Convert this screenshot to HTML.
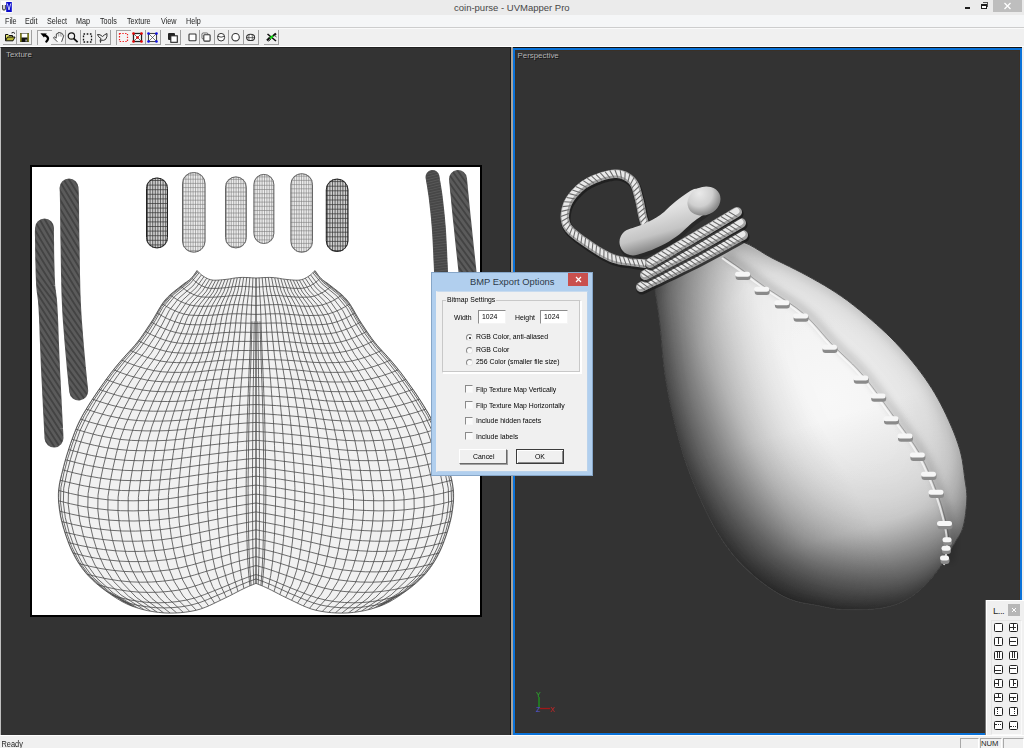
<!DOCTYPE html>
<html><head><meta charset="utf-8">
<style>
*{margin:0;padding:0;box-sizing:border-box}
html,body{width:1024px;height:748px;overflow:hidden;background:#f0f0f0;font-family:"Liberation Sans",sans-serif;color:#000}
.abs{position:absolute}
#title{left:0;top:0;width:1024px;height:15px;background:#ebebeb}
#title .t{left:454px;top:2px;font-size:9.5px;color:#474747;white-space:nowrap}
#menu{left:0;top:15px;width:1024px;height:13px;background:#f5f6f7;border-bottom:1px solid #cdcdcd}
#menu span{position:absolute;top:1.5px;font-size:7.2px;color:#1e1e1e;white-space:nowrap;transform:scaleY(1.24);transform-origin:0 100%}
#tool{left:0;top:28px;width:1024px;height:19px;background:#f0f0f0;border-top:1px solid #fafafa;border-bottom:1px solid #fff}
#vl{left:0;top:47px;width:511px;height:688px;background:#333;border-left:1px solid #c0c0c0;border-top:1px solid #202020;border-right:1px solid #111}
#sep{left:511px;top:47px;width:2px;height:688px;background:#a9a39b}
#vr{left:513px;top:48px;width:509px;height:687px;background:#333;border:2px solid #0a72d8;box-shadow:0 -1px 0 #111}
#vr .in{position:absolute;left:0;top:0;right:0;bottom:0;border:1px solid #3a3026}
.vlab{position:absolute;font-size:7.9px;color:#b4b4b4;text-shadow:1px 1px 0 #141414;white-space:nowrap}
#status{left:0;top:735px;width:1024px;height:13px;background:#f0f0f0;border-top:1px solid #fff}
#status .t{left:1.5px;top:3px;font-size:7.4px;color:#1a1a1a;transform:scaleY(1.1);transform-origin:0 0}
.pan{position:absolute;top:2px;height:12px;border-top:1px solid #a8a8a8;border-left:1px solid #a8a8a8;border-right:1px solid #fff}
#dlg{left:431px;top:272px;width:162px;height:204px;background:#b1cfee;border:1px solid #86a6c8}
#dlg .cl{position:absolute;left:4px;top:18px;width:152px;height:181px;background:#f0f0f0;border:1px solid #b9d2ec;border-left:2px solid #f0f0f0;border-top-color:#c8dbef}
.dt{position:absolute;font-size:6.9px;color:#000;white-space:nowrap;transform:scaleY(1.12);transform-origin:0 100%}
.chk{position:absolute;width:8px;height:8px;border-left:1px solid #8a8a8a;border-top:1px solid #8a8a8a;border-right:1px solid #f6f6f6;border-bottom:1px solid #f6f6f6;background:#fafafa}
.rad{position:absolute;width:7px;height:7px;border-radius:50%;border:1px solid #888;border-right-color:#e6e6e6;border-bottom-color:#e6e6e6;background:#fafafa}
.dbtn{position:absolute;height:15px;background:#f0f0f0;border-left:1px solid #fff;border-top:1px solid #fff;border-right:1px solid #6a6a6a;border-bottom:1px solid #6a6a6a;box-shadow:1px 1px 0 #a0a0a0}
.edit{position:absolute;background:#fff;border-top:1px solid #8c8c8c;border-left:1px solid #8c8c8c;border-right:1px solid #f4f4f4;border-bottom:1px solid #f4f4f4}
#flt{left:986px;top:600px;width:38px;height:135px;background:#f0f0f0;border-top:1px solid #fff;border-left:1px solid #fff;box-shadow:-1px 0 0 #7a7a7a}
.fi{position:absolute;width:9px;height:9px;border:1.5px solid #222;border-radius:1.5px;background:#fff}
</style></head><body>

<div id="title" class="abs">
  <svg class="abs" style="left:0;top:0" width="14" height="14" viewBox="0 0 14 14"><rect x="1" y="1" width="11.5" height="12" fill="#fbfbfb"/><path d="M2.6,5 V8.6 Q2.6,10 4,10 Q5.4,10 5.4,8.6 V5" fill="none" stroke="#555" stroke-width="1.3"/><rect x="6.2" y="2" width="5.6" height="10" fill="#0a0acc"/><path d="M7.3,3.5 L9,10 L10.7,3.5" fill="none" stroke="#dfe4ff" stroke-width="0.9"/></svg>
  <div class="abs t">coin-purse - UVMapper Pro</div>
  <div class="abs" style="left:965px;top:7px;width:5px;height:2px;background:#1e1e1e"></div>
  <div class="abs" style="left:983px;top:2px;width:5px;height:5px;border-top:1px solid #555;border-right:1px solid #555"></div>
  <div class="abs" style="left:981px;top:4px;width:6px;height:5px;border:1px solid #1e1e1e;border-top-width:2px;background:#fff"></div>
  <div class="abs" style="left:993px;top:0;width:29px;height:12px;background:#bebebe"></div>
  <svg class="abs" style="left:1003px;top:2px" width="9" height="8" viewBox="0 0 9 8"><path d="M1.5,1 L7.5,7 M7.5,1 L1.5,7" stroke="#fff" stroke-width="1.3"/></svg>
</div>

<div id="menu" class="abs">
  <span style="left:5px">File</span><span style="left:25px">Edit</span><span style="left:47px">Select</span><span style="left:76px">Map</span><span style="left:100px">Tools</span><span style="left:127px">Texture</span><span style="left:161px">View</span><span style="left:186px">Help</span>
</div>

<div id="tool" class="abs"></div>
<div class="abs" style="left:3px;top:30px;width:14px;height:15px;border-right:1px solid #a0a0a0;border-bottom:1px solid #a0a0a0;z-index:1"></div>
<svg class="abs" style="left:3px;top:30px" width="15" height="15" viewBox="0 0 15 15"><path d="M2.5,10.5 L2.5,4.5 L5,4.5 L6,5.5 L9.5,5.5 L9.5,7" fill="#e8e870" stroke="#111" stroke-width="1"/><path d="M2.5,10.8 L4.5,7 L12,7 L10,10.8 Z" fill="#b5b530" stroke="#111" stroke-width="1"/><path d="M8.5,3 Q10.5,1.5 12,3.5" fill="none" stroke="#111" stroke-width="1"/></svg>
<div class="abs" style="left:17px;top:30px;width:15px;height:15px;border-right:1px solid #a0a0a0;border-bottom:1px solid #a0a0a0;z-index:1"></div>
<svg class="abs" style="left:17px;top:30px" width="15" height="15" viewBox="0 0 15 15"><rect x="3" y="3" width="9" height="9" fill="#111"/><rect x="4.5" y="3.5" width="6" height="4" fill="#fff"/><rect x="3.2" y="3.2" width="1.3" height="8.6" fill="#9a9a20"/><rect x="10.5" y="3.2" width="1.3" height="8.6" fill="#9a9a20"/><rect x="8.5" y="9.5" width="1.2" height="2" fill="#ccc"/></svg>
<div class="abs" style="left:37px;top:30px;width:15px;height:15px;border-left:1px solid #a3a3a3;border-top:1px solid #a3a3a3;background:#f4f4f4"></div>
<svg class="abs" style="left:37px;top:30px" width="15" height="15" viewBox="0 0 15 15"><path d="M3.4,3.3 L9.8,3.4 L6.9,7.5 Z" fill="#000"/><path d="M7.6,5 Q11.6,7 11,9 Q10.6,10.5 9.3,11.6" fill="none" stroke="#000" stroke-width="2.2" stroke-linecap="round"/></svg>
<div class="abs" style="left:51px;top:30px;width:15px;height:15px;border-right:1px solid #a0a0a0;border-bottom:1px solid #a0a0a0;z-index:1"></div>
<svg class="abs" style="left:51px;top:30px" width="15" height="15" viewBox="0 0 15 15"><path d="M6.4,11.8 L2.8,8.2 Q2.3,7.2 3.3,6.9 L5.2,8.2 L5.4,3.9 Q6,3 6.8,3.7 L7.2,2.6 Q8,1.9 8.8,2.7 L10,3 Q10.9,2.9 11.1,4 L12,4.5 Q12.9,5.1 12.6,6.2 L10.6,11.8" fill="#fff" stroke="#333" stroke-width="0.9" stroke-linejoin="round"/><path d="M7.2,3 L7.4,6.5 M9.2,3 L9.2,6.5 M11,4 L10.9,6.8" stroke="#666" stroke-width="0.6"/></svg>
<div class="abs" style="left:65px;top:30px;width:16px;height:15px;border-right:1px solid #a0a0a0;border-bottom:1px solid #a0a0a0;z-index:1"></div>
<svg class="abs" style="left:65px;top:30px" width="15" height="15" viewBox="0 0 15 15"><circle cx="6.4" cy="6" r="3.2" fill="none" stroke="#111" stroke-width="1.2"/><path d="M8.6,8.4 L12.6,12.2" stroke="#111" stroke-width="1.8"/></svg>
<div class="abs" style="left:80px;top:30px;width:16px;height:15px;border-right:1px solid #a0a0a0;border-bottom:1px solid #a0a0a0;z-index:1"></div>
<svg class="abs" style="left:80px;top:30px" width="15" height="15" viewBox="0 0 15 15"><rect x="3.5" y="4" width="8" height="8" fill="none" stroke="#111" stroke-width="1.3" stroke-dasharray="1.6 1.6"/></svg>
<div class="abs" style="left:95px;top:30px;width:16px;height:15px;border-right:1px solid #a0a0a0;border-bottom:1px solid #a0a0a0;z-index:1"></div>
<svg class="abs" style="left:95px;top:30px" width="15" height="15" viewBox="0 0 15 15"><path d="M2.5,4.5 Q5,4 7.5,6.5 Q9.5,4.5 12,3.5 Q12.5,7 10.5,9.5 Q8.5,11 6,10 L5.5,12.5 Q4.5,9.5 6,8.5 Q3,7 2.5,4.5 Z" fill="none" stroke="#333" stroke-width="1"/></svg>
<div class="abs" style="left:116px;top:30px;width:15px;height:15px;border-left:1px solid #a3a3a3;border-top:1px solid #a3a3a3;background:#f4f4f4"></div>
<svg class="abs" style="left:116px;top:30px" width="15" height="15" viewBox="0 0 15 15"><rect x="3.5" y="3.5" width="8" height="8" fill="none" stroke="#f02020" stroke-width="1.2" stroke-dasharray="1.4 1.4"/></svg>
<div class="abs" style="left:130px;top:30px;width:16px;height:15px;border-right:1px solid #a0a0a0;border-bottom:1px solid #a0a0a0;z-index:1"></div>
<svg class="abs" style="left:130px;top:30px" width="15" height="15" viewBox="0 0 15 15"><rect x="3.5" y="3.5" width="8" height="8" fill="#fff" stroke="#222" stroke-width="1.3"/><path d="M3.5,3.5 L11.5,11.5 M11.5,3.5 L3.5,11.5" stroke="#444" stroke-width="0.8"/><circle cx="7.5" cy="7.5" r="1.3" fill="#e00"/><circle cx="3.5" cy="3.5" r="1.3" fill="#e00"/><circle cx="11.5" cy="3.5" r="1.3" fill="#e00"/><circle cx="3.5" cy="11.5" r="1.3" fill="#e00"/><circle cx="11.5" cy="11.5" r="1.3" fill="#e00"/></svg>
<div class="abs" style="left:145px;top:30px;width:16px;height:15px;border-right:1px solid #a0a0a0;border-bottom:1px solid #a0a0a0;z-index:1"></div>
<svg class="abs" style="left:145px;top:30px" width="15" height="15" viewBox="0 0 15 15"><rect x="3.5" y="3.5" width="8" height="8" fill="#fff" stroke="#444" stroke-width="1.1"/><path d="M3.5,3.5 L11.5,11.5 M11.5,3.5 L3.5,11.5" stroke="#555" stroke-width="0.8"/><circle cx="3.5" cy="3.5" r="1.3" fill="#11e"/><circle cx="11.5" cy="3.5" r="1.3" fill="#11e"/><circle cx="3.5" cy="11.5" r="1.3" fill="#11e"/><circle cx="11.5" cy="11.5" r="1.3" fill="#11e"/></svg>
<div class="abs" style="left:165px;top:30px;width:16px;height:15px;border-right:1px solid #a0a0a0;border-bottom:1px solid #a0a0a0;z-index:1"></div>
<svg class="abs" style="left:165px;top:30px" width="15" height="15" viewBox="0 0 15 15"><rect x="3" y="3" width="7" height="7" rx="1" fill="#222"/><rect x="5.8" y="5.8" width="6.5" height="6.5" fill="#fff" stroke="#222" stroke-width="1.1"/></svg>
<div class="abs" style="left:185px;top:30px;width:15px;height:15px;border-right:1px solid #a0a0a0;border-bottom:1px solid #a0a0a0;z-index:1"></div>
<svg class="abs" style="left:185px;top:30px" width="15" height="15" viewBox="0 0 15 15"><rect x="4" y="4" width="7" height="6.8" rx="0.8" fill="#fff" stroke="#333" stroke-width="1.1"/></svg>
<div class="abs" style="left:199px;top:30px;width:16px;height:15px;border-right:1px solid #a0a0a0;border-bottom:1px solid #a0a0a0;z-index:1"></div>
<svg class="abs" style="left:199px;top:30px" width="15" height="15" viewBox="0 0 15 15"><rect x="3" y="3" width="6" height="6" rx="1.2" fill="#fff" stroke="#555" stroke-width="0.9"/><rect x="4.8" y="4.8" width="6.3" height="6.3" rx="0.8" fill="#fff" stroke="#333" stroke-width="1.1"/></svg>
<div class="abs" style="left:214px;top:30px;width:15px;height:15px;border-right:1px solid #a0a0a0;border-bottom:1px solid #a0a0a0;z-index:1"></div>
<svg class="abs" style="left:214px;top:30px" width="15" height="15" viewBox="0 0 15 15"><rect x="3.6" y="3.4" width="7" height="7.6" rx="3.5" fill="#fff" stroke="#333" stroke-width="1"/><path d="M3.6,6.3 Q7.1,8 10.6,6.3" fill="none" stroke="#333" stroke-width="0.9"/></svg>
<div class="abs" style="left:228px;top:30px;width:16px;height:15px;border-right:1px solid #a0a0a0;border-bottom:1px solid #a0a0a0;z-index:1"></div>
<svg class="abs" style="left:228px;top:30px" width="15" height="15" viewBox="0 0 15 15"><circle cx="7.6" cy="7.2" r="3.7" fill="#fff" stroke="#333" stroke-width="1.1"/></svg>
<div class="abs" style="left:243px;top:30px;width:16px;height:15px;border-right:1px solid #a0a0a0;border-bottom:1px solid #a0a0a0;z-index:1"></div>
<svg class="abs" style="left:243px;top:30px" width="15" height="15" viewBox="0 0 15 15"><ellipse cx="7.6" cy="7.4" rx="4" ry="3.1" fill="#fff" stroke="#333" stroke-width="1.1"/><path d="M6.2,4.5 Q5.3,7.4 6.2,10.3 M9,4.5 Q9.9,7.4 9,10.3 M3.8,7.6 L11.4,7.6" fill="none" stroke="#333" stroke-width="0.7"/></svg>
<div class="abs" style="left:264px;top:30px;width:15px;height:15px;border-right:1px solid #a0a0a0;border-bottom:1px solid #a0a0a0;z-index:1"></div>
<svg class="abs" style="left:264px;top:30px" width="15" height="15" viewBox="0 0 15 15"><path d="M3,10.5 L6,7.5 M9,6 L12,3.5" stroke="#111" stroke-width="2.2"/><path d="M3.5,4 L12,11" stroke="#111" stroke-width="1.6"/><path d="M4.5,11.5 L7,9 M10,5 L12.5,7" stroke="#444" stroke-width="1"/><path d="M6,8.5 L9,5.8" stroke="#10d010" stroke-width="2.2"/></svg>

<div id="vl" class="abs"><div class="vlab" style="left:5px;top:1.5px">Texture</div></div>
<div id="sep" class="abs"></div>
<div id="vr" class="abs"><div class="in"></div><div class="vlab" style="left:2.5px;top:0.5px">Perspective</div></div>
<svg class="abs" style="left:0;top:0" width="1024" height="748" viewBox="0 0 1024 748">
<rect x="30" y="165" width="452" height="452" fill="#000"/>
<rect x="32" y="167" width="448" height="448" fill="#fff"/>
<defs><clipPath id="bagclip"><path d="M256.0,278.0 L254.2,277.9 L251.8,277.8 L248.9,277.6 L245.9,277.5 L242.8,277.4 L240.0,277.5 L237.4,277.7 L234.9,278.0 L232.3,278.4 L229.8,278.9 L227.4,279.2 L225.0,279.5 L222.7,279.7 L220.4,279.9 L218.1,280.1 L216.0,280.2 L213.9,280.2 L212.0,280.0 L210.2,279.6 L208.6,279.1 L207.1,278.4 L205.6,277.6 L204.3,276.8 L203.0,276.0 L201.8,275.1 L200.6,274.1 L199.4,273.0 L198.4,272.0 L197.6,271.1 L197.0,270.5 L196.4,271.4 L195.6,272.6 L194.6,274.0 L193.5,275.6 L192.3,277.1 L191.0,278.5 L189.6,279.7 L188.2,280.8 L186.6,281.9 L184.9,283.0 L183.1,284.4 L181.0,286.0 L178.6,287.9 L176.0,289.9 L173.2,292.2 L170.3,294.6 L167.6,297.2 L165.0,300.0 L162.7,303.1 L160.5,306.5 L158.4,310.1 L156.3,313.7 L154.2,317.4 L152.0,321.0 L149.7,324.5 L147.3,328.1 L144.9,331.7 L142.5,335.2 L140.0,338.7 L137.5,342.0 L134.9,345.2 L132.1,348.3 L129.4,351.3 L126.6,354.3 L124.0,357.2 L121.5,360.0 L119.3,362.6 L117.2,365.1 L115.2,367.5 L113.3,369.9 L111.2,372.5 L109.0,375.5 L106.5,378.8 L103.9,382.5 L101.2,386.3 L98.4,390.2 L95.8,394.1 L93.2,398.0 L90.7,401.8 L88.3,405.6 L85.9,409.5 L83.6,413.3 L81.5,417.2 L79.5,421.0 L77.7,424.8 L76.1,428.6 L74.6,432.3 L73.2,436.1 L71.8,439.8 L70.5,443.6 L69.2,447.4 L68.0,451.2 L66.8,454.9 L65.7,458.7 L64.6,462.6 L63.6,466.4 L62.6,470.3 L61.6,474.3 L60.6,478.3 L59.7,482.3 L59.1,486.2 L58.6,490.0 L58.4,493.7 L58.4,497.3 L58.5,500.9 L58.8,504.4 L59.2,507.9 L59.7,511.5 L60.3,515.1 L61.0,518.7 L61.9,522.3 L62.8,525.8 L63.9,529.4 L65.0,533.0 L66.2,536.6 L67.5,540.2 L68.8,543.8 L70.3,547.4 L71.9,551.0 L73.6,554.4 L75.4,557.8 L77.3,561.1 L79.4,564.4 L81.6,567.6 L83.9,570.7 L86.5,573.8 L89.3,576.8 L92.3,579.8 L95.4,582.7 L98.7,585.5 L102.2,588.3 L105.9,591.0 L109.7,593.7 L113.8,596.5 L117.9,599.1 L122.3,601.7 L126.9,604.0 L131.6,606.0 L136.6,607.7 L141.9,609.3 L147.3,610.6 L152.9,611.6 L158.5,612.4 L163.9,612.9 L169.3,613.1 L174.8,613.0 L180.3,612.7 L185.8,612.1 L191.0,611.3 L196.0,610.3 L200.7,609.0 L205.3,607.3 L209.6,605.5 L213.8,603.5 L217.9,601.5 L221.9,599.6 L225.8,597.7 L229.7,595.8 L233.4,593.9 L237.0,592.0 L240.3,590.3 L243.3,588.8 L246.1,587.5 L248.6,586.4 L251.0,585.4 L253.0,584.6 L254.7,583.9 L256.0,583.4 L257.3,583.9 L259.0,584.6 L261.0,585.4 L263.4,586.4 L265.9,587.5 L268.7,588.8 L271.7,590.3 L275.0,592.0 L278.6,593.9 L282.3,595.8 L286.2,597.7 L290.1,599.6 L294.1,601.5 L298.2,603.5 L302.4,605.5 L306.7,607.3 L311.3,609.0 L316.0,610.3 L321.0,611.3 L326.2,612.1 L331.6,612.7 L337.2,613.0 L342.7,613.1 L348.1,612.9 L353.5,612.4 L359.1,611.6 L364.6,610.6 L370.1,609.3 L375.4,607.7 L380.4,606.0 L385.1,604.0 L389.7,601.7 L394.1,599.1 L398.2,596.5 L402.3,593.7 L406.1,591.0 L409.8,588.3 L413.3,585.5 L416.6,582.7 L419.7,579.8 L422.7,576.8 L425.5,573.8 L428.1,570.7 L430.4,567.6 L432.6,564.4 L434.7,561.1 L436.6,557.8 L438.4,554.4 L440.1,551.0 L441.7,547.4 L443.2,543.8 L444.5,540.2 L445.8,536.6 L447.0,533.0 L448.1,529.4 L449.2,525.8 L450.1,522.3 L451.0,518.7 L451.7,515.1 L452.3,511.5 L452.8,507.9 L453.2,504.4 L453.5,500.9 L453.6,497.3 L453.6,493.7 L453.4,490.0 L452.9,486.2 L452.3,482.3 L451.4,478.3 L450.4,474.3 L449.4,470.3 L448.4,466.4 L447.4,462.6 L446.3,458.7 L445.2,454.9 L444.0,451.2 L442.8,447.4 L441.5,443.6 L440.2,439.8 L438.8,436.1 L437.4,432.3 L435.9,428.6 L434.3,424.8 L432.5,421.0 L430.5,417.2 L428.4,413.3 L426.1,409.5 L423.7,405.6 L421.3,401.8 L418.8,398.0 L416.3,394.1 L413.6,390.2 L410.8,386.3 L408.1,382.5 L405.5,378.8 L403.0,375.5 L400.8,372.5 L398.7,369.9 L396.8,367.5 L394.8,365.1 L392.7,362.6 L390.5,360.0 L388.0,357.2 L385.4,354.3 L382.6,351.3 L379.9,348.3 L377.1,345.2 L374.5,342.0 L372.0,338.7 L369.5,335.2 L367.1,331.7 L364.7,328.1 L362.3,324.5 L360.0,321.0 L357.8,317.4 L355.7,313.7 L353.6,310.1 L351.5,306.5 L349.3,303.1 L347.0,300.0 L344.4,297.2 L341.7,294.6 L338.8,292.2 L336.0,289.9 L333.4,287.9 L331.0,286.0 L328.9,284.4 L327.1,283.0 L325.4,281.9 L323.8,280.8 L322.4,279.7 L321.0,278.5 L319.7,277.1 L318.5,275.6 L317.4,274.0 L316.4,272.6 L315.6,271.4 L315.0,270.5 L314.4,271.1 L313.6,272.0 L312.6,273.0 L311.4,274.1 L310.2,275.1 L309.0,276.0 L307.7,276.8 L306.4,277.6 L304.9,278.4 L303.4,279.1 L301.8,279.6 L300.0,280.0 L298.1,280.2 L296.0,280.2 L293.9,280.1 L291.6,279.9 L289.3,279.7 L287.0,279.5 L284.6,279.2 L282.2,278.9 L279.7,278.4 L277.1,278.0 L274.6,277.7 L272.0,277.5 L269.2,277.4 L266.1,277.5 L263.1,277.6 L260.2,277.8 L257.8,277.9 L256.0,278.0Z"/></clipPath></defs>
<path d="M256.0,278.0 L254.2,277.9 L251.8,277.8 L248.9,277.6 L245.9,277.5 L242.8,277.4 L240.0,277.5 L237.4,277.7 L234.9,278.0 L232.3,278.4 L229.8,278.9 L227.4,279.2 L225.0,279.5 L222.7,279.7 L220.4,279.9 L218.1,280.1 L216.0,280.2 L213.9,280.2 L212.0,280.0 L210.2,279.6 L208.6,279.1 L207.1,278.4 L205.6,277.6 L204.3,276.8 L203.0,276.0 L201.8,275.1 L200.6,274.1 L199.4,273.0 L198.4,272.0 L197.6,271.1 L197.0,270.5 L196.4,271.4 L195.6,272.6 L194.6,274.0 L193.5,275.6 L192.3,277.1 L191.0,278.5 L189.6,279.7 L188.2,280.8 L186.6,281.9 L184.9,283.0 L183.1,284.4 L181.0,286.0 L178.6,287.9 L176.0,289.9 L173.2,292.2 L170.3,294.6 L167.6,297.2 L165.0,300.0 L162.7,303.1 L160.5,306.5 L158.4,310.1 L156.3,313.7 L154.2,317.4 L152.0,321.0 L149.7,324.5 L147.3,328.1 L144.9,331.7 L142.5,335.2 L140.0,338.7 L137.5,342.0 L134.9,345.2 L132.1,348.3 L129.4,351.3 L126.6,354.3 L124.0,357.2 L121.5,360.0 L119.3,362.6 L117.2,365.1 L115.2,367.5 L113.3,369.9 L111.2,372.5 L109.0,375.5 L106.5,378.8 L103.9,382.5 L101.2,386.3 L98.4,390.2 L95.8,394.1 L93.2,398.0 L90.7,401.8 L88.3,405.6 L85.9,409.5 L83.6,413.3 L81.5,417.2 L79.5,421.0 L77.7,424.8 L76.1,428.6 L74.6,432.3 L73.2,436.1 L71.8,439.8 L70.5,443.6 L69.2,447.4 L68.0,451.2 L66.8,454.9 L65.7,458.7 L64.6,462.6 L63.6,466.4 L62.6,470.3 L61.6,474.3 L60.6,478.3 L59.7,482.3 L59.1,486.2 L58.6,490.0 L58.4,493.7 L58.4,497.3 L58.5,500.9 L58.8,504.4 L59.2,507.9 L59.7,511.5 L60.3,515.1 L61.0,518.7 L61.9,522.3 L62.8,525.8 L63.9,529.4 L65.0,533.0 L66.2,536.6 L67.5,540.2 L68.8,543.8 L70.3,547.4 L71.9,551.0 L73.6,554.4 L75.4,557.8 L77.3,561.1 L79.4,564.4 L81.6,567.6 L83.9,570.7 L86.5,573.8 L89.3,576.8 L92.3,579.8 L95.4,582.7 L98.7,585.5 L102.2,588.3 L105.9,591.0 L109.7,593.7 L113.8,596.5 L117.9,599.1 L122.3,601.7 L126.9,604.0 L131.6,606.0 L136.6,607.7 L141.9,609.3 L147.3,610.6 L152.9,611.6 L158.5,612.4 L163.9,612.9 L169.3,613.1 L174.8,613.0 L180.3,612.7 L185.8,612.1 L191.0,611.3 L196.0,610.3 L200.7,609.0 L205.3,607.3 L209.6,605.5 L213.8,603.5 L217.9,601.5 L221.9,599.6 L225.8,597.7 L229.7,595.8 L233.4,593.9 L237.0,592.0 L240.3,590.3 L243.3,588.8 L246.1,587.5 L248.6,586.4 L251.0,585.4 L253.0,584.6 L254.7,583.9 L256.0,583.4 L257.3,583.9 L259.0,584.6 L261.0,585.4 L263.4,586.4 L265.9,587.5 L268.7,588.8 L271.7,590.3 L275.0,592.0 L278.6,593.9 L282.3,595.8 L286.2,597.7 L290.1,599.6 L294.1,601.5 L298.2,603.5 L302.4,605.5 L306.7,607.3 L311.3,609.0 L316.0,610.3 L321.0,611.3 L326.2,612.1 L331.6,612.7 L337.2,613.0 L342.7,613.1 L348.1,612.9 L353.5,612.4 L359.1,611.6 L364.6,610.6 L370.1,609.3 L375.4,607.7 L380.4,606.0 L385.1,604.0 L389.7,601.7 L394.1,599.1 L398.2,596.5 L402.3,593.7 L406.1,591.0 L409.8,588.3 L413.3,585.5 L416.6,582.7 L419.7,579.8 L422.7,576.8 L425.5,573.8 L428.1,570.7 L430.4,567.6 L432.6,564.4 L434.7,561.1 L436.6,557.8 L438.4,554.4 L440.1,551.0 L441.7,547.4 L443.2,543.8 L444.5,540.2 L445.8,536.6 L447.0,533.0 L448.1,529.4 L449.2,525.8 L450.1,522.3 L451.0,518.7 L451.7,515.1 L452.3,511.5 L452.8,507.9 L453.2,504.4 L453.5,500.9 L453.6,497.3 L453.6,493.7 L453.4,490.0 L452.9,486.2 L452.3,482.3 L451.4,478.3 L450.4,474.3 L449.4,470.3 L448.4,466.4 L447.4,462.6 L446.3,458.7 L445.2,454.9 L444.0,451.2 L442.8,447.4 L441.5,443.6 L440.2,439.8 L438.8,436.1 L437.4,432.3 L435.9,428.6 L434.3,424.8 L432.5,421.0 L430.5,417.2 L428.4,413.3 L426.1,409.5 L423.7,405.6 L421.3,401.8 L418.8,398.0 L416.3,394.1 L413.6,390.2 L410.8,386.3 L408.1,382.5 L405.5,378.8 L403.0,375.5 L400.8,372.5 L398.7,369.9 L396.8,367.5 L394.8,365.1 L392.7,362.6 L390.5,360.0 L388.0,357.2 L385.4,354.3 L382.6,351.3 L379.9,348.3 L377.1,345.2 L374.5,342.0 L372.0,338.7 L369.5,335.2 L367.1,331.7 L364.7,328.1 L362.3,324.5 L360.0,321.0 L357.8,317.4 L355.7,313.7 L353.6,310.1 L351.5,306.5 L349.3,303.1 L347.0,300.0 L344.4,297.2 L341.7,294.6 L338.8,292.2 L336.0,289.9 L333.4,287.9 L331.0,286.0 L328.9,284.4 L327.1,283.0 L325.4,281.9 L323.8,280.8 L322.4,279.7 L321.0,278.5 L319.7,277.1 L318.5,275.6 L317.4,274.0 L316.4,272.6 L315.6,271.4 L315.0,270.5 L314.4,271.1 L313.6,272.0 L312.6,273.0 L311.4,274.1 L310.2,275.1 L309.0,276.0 L307.7,276.8 L306.4,277.6 L304.9,278.4 L303.4,279.1 L301.8,279.6 L300.0,280.0 L298.1,280.2 L296.0,280.2 L293.9,280.1 L291.6,279.9 L289.3,279.7 L287.0,279.5 L284.6,279.2 L282.2,278.9 L279.7,278.4 L277.1,278.0 L274.6,277.7 L272.0,277.5 L269.2,277.4 L266.1,277.5 L263.1,277.6 L260.2,277.8 L257.8,277.9 L256.0,278.0Z" fill="#f1f1f1"/>
<g clip-path="url(#bagclip)"><path d="M252.9,277.8 252.4,290.8 251.6,303.6 251.1,316.5 250.7,329.3 250.3,342.2 249.8,355.0 249.2,367.9 248.7,380.7 248.2,393.5 247.7,406.4 247.3,419.2 247.0,432.0 246.7,444.8 246.5,457.7 246.3,470.5 246.2,483.3 246.2,496.1 246.3,509.0 246.5,521.8 246.8,534.6 247.2,547.4 247.7,560.2 248.6,573.1 249.9,585.9M249.8,277.7 248.8,290.5 247.3,303.4 246.2,316.3 245.5,329.2 244.7,342.1 243.7,355.0 242.5,368.0 241.4,380.9 240.4,393.9 239.5,406.8 238.6,419.8 238.0,432.7 237.5,445.7 237.0,458.7 236.7,471.6 236.4,484.6 236.4,497.6 236.6,510.6 237.0,523.6 237.6,536.5 238.4,549.5 239.5,562.5 241.3,575.5 243.9,588.5M246.7,277.5 245.3,290.3 243.0,303.2 241.4,316.2 240.3,329.1 239.0,342.1 237.6,355.2 235.8,368.2 234.1,381.3 232.6,394.3 231.3,407.4 230.0,420.5 229.1,433.6 228.3,446.7 227.7,459.8 227.1,473.0 226.7,486.1 226.7,499.3 227.1,512.4 227.7,525.6 228.5,538.7 229.7,551.9 231.5,565.1 234.1,578.3 238.0,591.5M243.6,277.5 241.7,290.2 238.6,303.1 236.5,316.1 235.1,329.1 233.4,342.2 231.5,355.4 229.1,368.5 226.9,381.7 224.9,394.9 223.1,408.1 221.5,421.3 220.1,434.6 219.2,447.8 218.3,461.1 217.6,474.4 217.1,487.7 217.1,501.0 217.5,514.3 218.4,527.7 219.5,541.0 221.1,554.4 223.4,567.7 227.0,581.1 232.2,594.5M240.4,277.5 238.1,290.2 234.3,303.1 231.6,316.1 229.8,329.2 227.8,342.4 225.3,355.6 222.4,368.9 219.6,382.1 217.2,395.5 214.9,408.8 212.9,422.2 211.2,435.5 210.0,448.9 208.9,462.4 208.1,475.8 207.4,489.3 207.4,502.8 208.0,516.2 209.1,529.7 210.5,543.3 212.5,556.8 215.4,570.3 219.8,583.9 226.4,597.5M237.3,277.7 234.5,290.3 229.9,303.2 226.8,316.3 224.6,329.5 222.1,342.7 219.2,356.0 215.6,369.3 212.4,382.7 209.4,396.1 206.7,409.6 204.2,423.0 202.3,436.5 200.8,450.1 199.5,463.6 198.5,477.2 197.7,490.8 197.7,504.4 198.4,518.1 199.7,531.7 201.4,545.4 203.8,559.1 207.2,572.8 212.6,586.6 220.4,600.3M234.3,278.1 231.0,290.7 225.6,303.6 221.9,316.7 219.4,329.9 216.5,343.1 213.1,356.5 208.9,369.9 205.1,383.4 201.7,396.9 198.5,410.4 195.6,424.0 193.3,437.7 191.6,451.3 190.1,465.0 188.9,478.7 188.0,492.5 188.0,506.2 188.8,520.0 190.3,533.8 192.3,547.6 195.1,561.5 199.1,575.3 205.4,589.2 214.5,603.1M231.2,278.6 227.5,291.1 221.3,304.0 217.1,317.1 214.2,330.3 210.9,343.7 207.0,357.1 202.2,370.6 197.8,384.1 193.9,397.7 190.3,411.4 187.0,425.1 184.4,438.8 182.4,452.6 180.7,466.4 179.3,480.2 178.3,494.1 178.3,508.0 179.2,521.9 180.9,535.8 183.2,549.8 186.4,563.8 191.0,577.8 198.1,591.9 208.6,605.9M228.1,279.1 223.9,291.5 217.0,304.4 212.2,317.5 209.0,330.7 205.2,344.1 200.9,357.6 195.5,371.1 190.5,384.7 186.1,398.4 182.0,412.1 178.3,425.9 175.4,439.8 173.2,453.6 171.2,467.5 169.7,481.5 168.4,495.5 168.4,509.5 169.5,523.5 171.4,537.6 174.0,551.7 177.5,565.8 182.7,580.0 190.7,594.1 202.5,608.3M225.0,279.5 220.3,291.7 212.6,304.6 207.3,317.7 203.7,331.0 199.5,344.3 194.7,357.9 188.7,371.4 183.2,385.1 178.3,398.8 173.7,412.6 169.6,426.5 166.3,440.4 163.8,454.4 161.6,468.4 159.9,482.4 158.5,496.5 158.5,510.6 159.6,524.7 161.7,538.9 164.6,553.1 168.5,567.4 174.3,581.6 183.1,595.9 196.2,610.2M221.9,279.8 216.8,291.9 208.3,304.7 202.4,317.8 198.4,331.0 193.8,344.4 188.4,357.9 181.8,371.5 175.7,385.2 170.3,399.0 165.3,412.9 160.7,426.8 157.1,440.7 154.3,454.7 151.9,468.8 150.0,482.9 148.5,497.0 148.4,511.2 149.7,525.5 152.0,539.7 155.0,554.0 159.4,568.3 165.7,582.7 175.4,597.1 189.8,611.5M218.8,280.1 213.2,292.1 203.9,304.8 197.5,317.8 193.1,331.0 188.1,344.4 182.2,357.9 174.9,371.5 168.3,385.2 162.4,399.0 156.9,412.9 151.8,426.8 147.8,440.8 144.8,454.9 142.2,469.0 140.1,483.2 138.4,497.4 138.3,511.6 139.7,525.9 142.1,540.2 145.5,554.6 150.2,569.0 157.0,583.4 167.6,597.9 183.3,612.4M215.7,280.2 209.6,292.1 199.5,304.7 192.5,317.7 187.8,330.8 182.3,344.2 175.9,357.7 168.0,371.3 160.8,385.0 154.4,398.8 148.4,412.7 142.9,426.7 138.6,440.7 135.3,454.8 132.5,469.0 130.1,483.2 128.2,497.4 128.2,511.7 129.6,526.0 132.3,540.4 135.9,554.9 140.9,569.3 148.3,583.8 159.8,598.4 176.7,612.9M212.6,280.1 206.0,291.8 195.1,304.3 187.6,317.2 182.5,330.4 176.5,343.7 169.6,357.2 161.1,370.8 153.4,384.5 146.4,398.3 140.0,412.2 134.0,426.2 129.3,440.3 125.8,454.4 122.7,468.6 120.1,482.8 118.1,497.1 118.0,511.5 119.5,525.8 122.4,540.3 126.2,554.8 131.7,569.3 139.6,583.9 151.9,598.5 170.2,613.1M209.6,279.4 202.5,290.9 190.8,303.4 182.7,316.3 177.2,329.4 170.8,342.7 163.4,356.2 154.3,369.8 146.0,383.5 138.5,397.3 131.5,411.3 125.2,425.3 120.1,439.4 116.3,453.5 113.0,467.7 110.2,482.0 108.0,496.4 107.9,510.8 109.5,525.2 112.5,539.7 116.6,554.3 122.4,568.9 130.9,583.5 144.1,598.2 163.6,612.9M206.7,278.2 199.1,289.6 186.6,302.0 178.0,314.8 172.1,327.9 165.3,341.2 157.3,354.7 147.6,368.3 138.7,382.0 130.7,395.9 123.2,409.8 116.4,423.8 111.0,438.0 106.9,452.2 103.3,466.4 100.3,480.8 98.0,495.2 97.8,509.6 99.5,524.1 102.7,538.7 107.1,553.3 113.2,568.0 122.3,582.7 136.3,597.4 157.1,612.2M204.0,276.6 195.9,287.9 182.6,300.2 173.5,313.0 167.1,326.0 159.9,339.3 151.4,352.8 141.0,366.4 131.5,380.2 123.0,394.0 115.1,408.0 107.8,422.1 102.0,436.2 97.6,450.4 93.8,464.8 90.6,479.1 88.1,493.6 87.8,508.1 89.6,522.7 93.0,537.3 97.6,552.0 104.1,566.7 113.7,581.5 128.6,596.3 150.6,611.2M201.5,274.8 192.9,286.0 178.8,298.2 169.0,310.9 162.3,324.0 154.6,337.2 145.6,350.7 134.6,364.3 124.5,378.0 115.4,391.9 107.0,405.9 99.3,420.0 93.1,434.2 88.4,448.4 84.4,462.8 80.9,477.2 78.2,491.7 77.9,506.3 79.8,520.9 83.4,535.6 88.2,550.3 95.0,565.1 105.2,580.0 120.9,594.9 144.2,609.8M199.2,272.7 190.1,283.7 175.2,295.9 164.9,308.5 157.7,321.5 149.6,334.8 140.0,348.2 128.3,361.8 117.7,375.6 108.1,389.5 99.1,403.5 91.0,417.6 84.4,431.8 79.4,446.1 75.1,460.5 71.4,475.0 68.5,489.5 68.2,504.1 70.1,518.8 73.8,533.5 78.9,548.3 86.1,563.2 96.8,578.1 113.3,593.1 137.8,608.1M197.0,270.5 187.4,281.3 171.7,293.4 160.8,306.0 153.3,318.9 144.6,332.2 134.6,345.6 122.2,359.2 110.9,372.9 100.8,386.8 91.4,400.8 82.7,415.0 75.8,429.2 70.5,443.5 65.9,457.9 62.0,472.4 59.0,487.0 58.6,501.7 60.6,516.4 64.4,531.2 69.7,546.0 77.3,560.9 88.4,575.9 105.8,590.9 131.6,606.0M198.1,271.6 188.7,282.5 173.4,294.7 162.8,307.3 155.5,320.2 147.1,333.5 137.3,346.9 125.3,360.5 114.3,374.3 104.4,388.1 95.2,402.2 86.8,416.3 80.1,430.5 75.0,444.8 70.5,459.2 66.7,473.7 63.7,488.3 63.4,502.9 65.3,517.6 69.1,532.4 74.3,547.2 81.7,562.1 92.6,577.0 109.5,592.0 134.7,607.1M197.4,270.9 187.9,281.8 172.4,293.9 161.6,306.5 154.2,319.5 145.6,332.7 135.7,346.1 123.5,359.7 112.3,373.5 102.3,387.3 92.9,401.4 84.4,415.5 77.5,429.7 72.3,444.1 67.7,458.5 63.9,473.0 60.9,487.5 60.5,502.2 62.5,516.9 66.3,531.7 71.6,546.5 79.0,561.4 90.1,576.4 107.3,591.4 132.8,606.4M254.2,321.4 254.0,339.4 253.7,357.0 253.5,374.3 253.2,391.3 253.0,408.1 252.8,424.7 252.7,441.2 252.6,457.5 252.5,473.7 252.5,489.7 252.5,505.7 252.6,521.6 252.7,537.4 252.9,553.1 253.3,568.7 253.8,584.3M252.0,321.3 251.5,339.4 251.0,357.0 250.4,374.3 249.8,391.4 249.3,408.3 248.9,424.9 248.6,441.5 248.4,457.9 248.2,474.1 248.1,490.3 248.2,506.3 248.4,522.3 248.7,538.2 249.1,554.0 249.9,569.7 251.1,585.4M256.0,287.2 251.8,286.9 247.6,286.6 243.3,286.4 239.1,286.4 234.9,286.6 230.7,287.1 226.6,287.6 222.4,288.0 218.1,288.3 213.9,288.4 209.7,288.3 205.5,287.4 201.6,285.7 197.9,283.5 194.6,280.9 191.5,277.9M256.0,296.3 251.1,296.0 246.2,295.7 241.4,295.5 236.5,295.5 231.6,295.7 226.8,296.2 221.9,296.6 217.1,297.0 212.2,297.2 207.2,297.2 202.3,297.0 197.5,296.0 192.9,294.2 188.5,292.0 184.5,289.2 180.7,286.2M256.0,305.4 250.5,305.1 244.9,304.8 239.4,304.7 233.9,304.6 228.3,304.9 222.8,305.3 217.3,305.8 211.8,306.1 206.2,306.3 200.7,306.3 195.1,305.9 189.5,304.9 184.3,303.1 179.2,300.8 174.5,298.0 170.0,294.9M256.0,314.4 250.0,314.2 244.0,313.9 238.0,313.8 232.0,313.8 226.0,314.1 220.0,314.6 214.0,315.0 208.0,315.4 202.0,315.5 195.9,315.4 189.8,315.1 183.8,314.0 178.0,312.1 172.5,309.7 167.2,306.9 162.2,303.8M256.0,323.5 249.7,323.2 243.3,323.1 237.0,323.0 230.7,323.1 224.4,323.4 218.1,323.9 211.8,324.4 205.4,324.7 199.0,324.8 192.6,324.7 186.2,324.3 179.8,323.2 173.7,321.3 167.8,318.9 162.2,316.0 156.9,312.8M256.0,332.5 249.3,332.3 242.7,332.2 236.0,332.2 229.4,332.3 222.7,332.7 216.1,333.2 209.5,333.8 202.8,334.1 196.0,334.2 189.3,334.1 182.5,333.7 175.8,332.5 169.3,330.6 163.0,328.2 157.1,325.2 151.3,322.0M256.0,341.5 248.9,341.4 241.9,341.4 234.9,341.4 227.9,341.6 220.9,342.0 213.9,342.6 206.9,343.2 199.8,343.6 192.7,343.6 185.5,343.5 178.3,343.1 171.2,341.9 164.4,340.0 157.7,337.5 151.3,334.6 145.2,331.4M256.0,350.5 248.5,350.5 241.1,350.5 233.7,350.7 226.3,350.9 218.8,351.4 211.4,352.1 204.0,352.7 196.5,353.1 189.0,353.2 181.4,353.1 173.8,352.6 166.3,351.4 158.9,349.4 151.8,347.0 145.0,344.1 138.4,340.8M256.0,359.5 248.0,359.6 240.1,359.7 232.2,359.9 224.3,360.3 216.4,360.8 208.5,361.5 200.6,362.2 192.6,362.6 184.5,362.7 176.4,362.6 168.3,362.1 160.3,361.0 152.4,359.0 144.8,356.6 137.4,353.6 130.3,350.4M256.0,368.5 247.5,368.6 239.0,368.8 230.6,369.2 222.2,369.6 213.7,370.2 205.3,371.0 196.9,371.8 188.3,372.2 179.7,372.4 171.0,372.3 162.4,371.8 153.8,370.6 145.4,368.6 137.2,366.2 129.2,363.3 121.5,360.0M256.0,377.5 247.0,377.7 238.1,378.0 229.1,378.5 220.2,379.0 211.3,379.7 202.4,380.6 193.4,381.4 184.4,381.9 175.3,382.0 166.1,381.9 156.9,381.4 147.8,380.3 138.9,378.3 130.2,375.9 121.7,373.0 113.5,369.7M256.0,386.5 246.6,386.8 237.2,387.2 227.8,387.8 218.5,388.4 209.1,389.2 199.7,390.1 190.3,391.0 180.8,391.6 171.2,391.7 161.6,391.7 152.0,391.2 142.4,390.0 133.0,388.1 123.8,385.7 114.8,382.7 106.1,379.4M256.0,395.5 246.1,395.9 236.3,396.4 226.5,397.1 216.8,397.8 207.0,398.7 197.2,399.7 187.4,400.7 177.4,401.3 167.4,401.5 157.3,401.4 147.2,400.9 137.2,399.8 127.4,397.9 117.7,395.5 108.3,392.6 99.1,389.3M256.0,404.5 245.7,405.0 235.5,405.6 225.3,406.4 215.2,407.2 205.0,408.2 194.8,409.3 184.6,410.4 174.2,411.0 163.8,411.2 153.3,411.2 142.8,410.8 132.3,409.6 122.0,407.7 111.9,405.3 102.1,402.4 92.4,399.2M256.0,413.4 245.3,414.0 234.7,414.8 224.2,415.7 213.7,416.6 203.1,417.7 192.5,418.9 181.9,420.1 171.2,420.8 160.3,421.1 149.5,421.1 138.6,420.6 127.7,419.5 117.0,417.6 106.5,415.3 96.2,412.4 86.1,409.1M256.0,422.4 245.0,423.1 234.1,424.0 223.2,425.0 212.3,426.1 201.4,427.3 190.5,428.6 179.6,429.8 168.5,430.6 157.3,430.9 146.0,430.9 134.8,430.5 123.5,429.4 112.5,427.6 101.6,425.2 90.9,422.4 80.5,419.1M256.0,431.4 244.7,432.2 233.5,433.2 222.4,434.3 211.2,435.5 200.0,436.8 188.9,438.2 177.6,439.5 166.3,440.4 154.8,440.8 143.2,440.8 131.7,440.4 120.1,439.4 108.8,437.5 97.6,435.3 86.6,432.4 75.8,429.2M256.0,440.3 244.5,441.3 233.1,442.4 221.7,443.7 210.3,445.0 198.9,446.4 187.5,447.9 176.1,449.3 164.5,450.3 152.7,450.7 141.0,450.7 129.1,450.4 117.4,449.3 105.7,447.6 94.3,445.3 83.0,442.5 72.0,439.3M256.0,449.3 244.3,450.3 232.7,451.6 221.1,453.0 209.5,454.5 197.9,456.0 186.3,457.6 174.7,459.1 162.9,460.1 150.9,460.6 138.9,460.7 126.9,460.4 114.9,459.4 103.0,457.6 91.3,455.4 79.8,452.6 68.5,449.5M256.0,458.3 244.1,459.4 232.3,460.8 220.6,462.3 208.8,464.0 197.0,465.6 185.3,467.3 173.4,468.9 161.4,470.0 149.3,470.5 137.1,470.7 124.8,470.4 112.6,469.4 100.6,467.7 88.6,465.5 76.9,462.8 65.4,459.7M256.0,467.2 243.9,468.5 232.0,470.0 220.1,471.7 208.2,473.4 196.3,475.2 184.4,477.0 172.4,478.7 160.2,479.9 147.8,480.5 135.5,480.7 123.0,480.4 110.7,479.5 98.4,477.8 86.3,475.7 74.4,473.0 62.7,469.9M256.0,476.2 243.8,477.6 231.7,479.2 219.7,481.1 207.7,482.9 195.6,484.8 183.5,486.8 171.4,488.6 159.0,489.8 146.6,490.5 134.0,490.7 121.4,490.5 108.9,489.6 96.5,488.0 84.2,485.9 72.1,483.2 60.2,480.2M256.0,485.1 243.7,486.6 231.5,488.4 219.4,490.4 207.3,492.4 195.2,494.4 183.0,496.5 170.8,498.4 158.3,499.8 145.8,500.5 133.1,500.8 120.4,500.6 107.8,499.8 95.2,498.2 82.8,496.1 70.6,493.5 58.6,490.5M256.0,494.1 243.7,495.7 231.5,497.6 219.5,499.8 207.4,502.0 195.2,504.1 183.1,506.3 170.9,508.3 158.4,509.8 145.8,510.5 133.2,510.9 120.5,510.7 107.8,509.9 95.2,508.4 82.8,506.4 70.6,503.8 58.5,500.8M256.0,503.0 243.8,504.8 231.7,506.9 219.7,509.2 207.7,511.5 195.7,513.7 183.6,516.1 171.5,518.2 159.1,519.7 146.6,520.6 134.0,521.0 121.4,520.8 108.8,520.1 96.3,518.6 83.9,516.7 71.7,514.2 59.7,511.2M256.0,511.9 243.9,513.9 232.0,516.1 220.2,518.5 208.3,521.0 196.4,523.4 184.5,525.9 172.5,528.1 160.3,529.7 147.9,530.6 135.4,531.1 122.9,531.0 110.4,530.3 98.0,528.9 85.7,527.0 73.6,524.5 61.7,521.6M256.0,520.9 244.1,523.0 232.4,525.3 220.8,527.9 209.1,530.5 197.4,533.1 185.7,535.7 173.9,538.0 161.9,539.7 149.7,540.7 137.4,541.2 125.1,541.2 112.7,540.6 100.5,539.2 88.4,537.4 76.5,534.9 64.7,532.1M256.0,529.8 244.4,532.0 232.9,534.5 221.5,537.3 210.1,540.1 198.7,542.7 187.2,545.5 175.6,547.9 163.8,549.8 151.8,550.8 139.8,551.4 127.7,551.4 115.6,550.8 103.6,549.5 91.6,547.7 79.9,545.4 68.3,542.5M256.0,538.8 244.7,541.1 233.5,543.8 222.4,546.7 211.3,549.6 200.2,552.4 189.0,555.3 177.8,557.9 166.2,559.8 154.5,560.9 142.7,561.6 130.9,561.6 119.1,561.1 107.4,559.9 95.7,558.2 84.2,555.8 72.9,553.0M256.0,547.7 245.1,550.2 234.3,553.0 223.6,556.1 212.9,559.2 202.1,562.1 191.4,565.1 180.5,567.8 169.4,569.9 158.0,571.1 146.6,571.8 135.1,571.9 123.7,571.4 112.3,570.3 101.0,568.6 89.9,566.3 78.9,563.6M256.0,556.6 245.6,559.3 235.3,562.2 225.1,565.5 215.0,568.8 204.7,571.8 194.4,575.0 184.1,577.8 173.4,579.9 162.6,581.2 151.7,582.0 140.7,582.2 129.7,581.8 118.8,580.7 108.0,579.0 97.3,576.8 86.8,574.1M256.0,565.5 246.3,568.3 236.7,571.5 227.2,574.9 217.8,578.3 208.2,581.5 198.7,584.8 189.0,587.8 179.1,590.0 168.9,591.4 158.6,592.2 148.4,592.4 138.1,592.1 127.8,591.1 117.7,589.5 107.7,587.4 97.8,584.7M256.0,574.5 247.2,577.4 238.5,580.7 230.0,584.3 221.4,587.9 212.8,591.3 204.2,594.7 195.4,597.8 186.3,600.1 177.1,601.6 167.7,602.5 158.3,602.8 148.9,602.5 139.5,601.5 130.3,600.0 121.1,597.9 112.1,595.4M256.0,578.9 247.7,582.0 239.6,585.3 231.6,589.0 223.6,592.7 215.5,596.1 207.4,599.6 199.1,602.8 190.6,605.2 181.9,606.7 173.0,607.6 164.2,607.9 155.3,607.7 146.4,606.7 137.7,605.3 129.1,603.2 120.6,600.7M256.0,278.0 256.0,363.3 256.0,439.4 256.0,512.4 256.0,583.4M259.1,277.8 259.6,290.8 260.4,303.6 260.9,316.5 261.3,329.3 261.7,342.2 262.2,355.0 262.8,367.9 263.3,380.7 263.8,393.5 264.3,406.4 264.7,419.2 265.0,432.0 265.3,444.8 265.5,457.7 265.7,470.5 265.8,483.3 265.8,496.1 265.7,509.0 265.5,521.8 265.2,534.6 264.8,547.4 264.3,560.2 263.4,573.1 262.1,585.9M262.2,277.7 263.2,290.5 264.7,303.4 265.8,316.3 266.5,329.2 267.3,342.1 268.3,355.0 269.5,368.0 270.6,380.9 271.6,393.9 272.5,406.8 273.4,419.8 274.0,432.7 274.5,445.7 275.0,458.7 275.3,471.6 275.6,484.6 275.6,497.6 275.4,510.6 275.0,523.6 274.4,536.5 273.6,549.5 272.5,562.5 270.7,575.5 268.1,588.5M265.3,277.5 266.7,290.3 269.0,303.2 270.6,316.2 271.7,329.1 273.0,342.1 274.4,355.2 276.2,368.2 277.9,381.3 279.4,394.3 280.7,407.4 282.0,420.5 282.9,433.6 283.7,446.7 284.3,459.8 284.9,473.0 285.3,486.1 285.3,499.3 284.9,512.4 284.3,525.6 283.5,538.7 282.3,551.9 280.5,565.1 277.9,578.3 274.0,591.5M268.4,277.5 270.3,290.2 273.4,303.1 275.5,316.1 276.9,329.1 278.6,342.2 280.5,355.4 282.9,368.5 285.1,381.7 287.1,394.9 288.9,408.1 290.5,421.3 291.9,434.6 292.8,447.8 293.7,461.1 294.4,474.4 294.9,487.7 294.9,501.0 294.5,514.3 293.6,527.7 292.5,541.0 290.9,554.4 288.6,567.7 285.0,581.1 279.8,594.5M271.6,277.5 273.9,290.2 277.7,303.1 280.4,316.1 282.2,329.2 284.2,342.4 286.7,355.6 289.6,368.9 292.4,382.1 294.8,395.5 297.1,408.8 299.1,422.2 300.8,435.5 302.0,448.9 303.1,462.4 303.9,475.8 304.6,489.3 304.6,502.8 304.0,516.2 302.9,529.7 301.5,543.3 299.5,556.8 296.6,570.3 292.2,583.9 285.6,597.5M274.7,277.7 277.5,290.3 282.1,303.2 285.2,316.3 287.4,329.5 289.9,342.7 292.8,356.0 296.4,369.3 299.6,382.7 302.6,396.1 305.3,409.6 307.8,423.0 309.7,436.5 311.2,450.1 312.5,463.6 313.5,477.2 314.3,490.8 314.3,504.4 313.6,518.1 312.3,531.7 310.6,545.4 308.2,559.1 304.8,572.8 299.4,586.6 291.6,600.3M277.7,278.1 281.0,290.7 286.4,303.6 290.1,316.7 292.6,329.9 295.5,343.1 298.9,356.5 303.1,369.9 306.9,383.4 310.3,396.9 313.5,410.4 316.4,424.0 318.7,437.7 320.4,451.3 321.9,465.0 323.1,478.7 324.0,492.5 324.0,506.2 323.2,520.0 321.7,533.8 319.7,547.6 316.9,561.5 312.9,575.3 306.6,589.2 297.5,603.1M280.8,278.6 284.5,291.1 290.7,304.0 294.9,317.1 297.8,330.3 301.1,343.7 305.0,357.1 309.8,370.6 314.2,384.1 318.1,397.7 321.7,411.4 325.0,425.1 327.6,438.8 329.6,452.6 331.3,466.4 332.7,480.2 333.7,494.1 333.7,508.0 332.8,521.9 331.1,535.8 328.8,549.8 325.6,563.8 321.0,577.8 313.9,591.9 303.4,605.9M283.9,279.1 288.1,291.5 295.0,304.4 299.8,317.5 303.0,330.7 306.8,344.1 311.1,357.6 316.5,371.1 321.5,384.7 325.9,398.4 330.0,412.1 333.7,425.9 336.6,439.8 338.8,453.6 340.8,467.5 342.3,481.5 343.6,495.5 343.6,509.5 342.5,523.5 340.6,537.6 338.0,551.7 334.5,565.8 329.3,580.0 321.3,594.1 309.5,608.3M287.0,279.5 291.7,291.7 299.4,304.6 304.7,317.7 308.3,331.0 312.5,344.3 317.3,357.9 323.3,371.4 328.8,385.1 333.7,398.8 338.3,412.6 342.4,426.5 345.7,440.4 348.2,454.4 350.4,468.4 352.1,482.4 353.5,496.5 353.5,510.6 352.4,524.7 350.3,538.9 347.4,553.1 343.5,567.4 337.7,581.6 328.9,595.9 315.8,610.2M290.1,279.8 295.2,291.9 303.7,304.7 309.6,317.8 313.6,331.0 318.2,344.4 323.6,357.9 330.2,371.5 336.3,385.2 341.7,399.0 346.7,412.9 351.3,426.8 354.9,440.7 357.7,454.7 360.1,468.8 362.0,482.9 363.5,497.0 363.6,511.2 362.3,525.5 360.0,539.7 357.0,554.0 352.6,568.3 346.3,582.7 336.6,597.1 322.2,611.5M293.2,280.1 298.8,292.1 308.1,304.8 314.5,317.8 318.9,331.0 323.9,344.4 329.8,357.9 337.1,371.5 343.7,385.2 349.6,399.0 355.1,412.9 360.2,426.8 364.2,440.8 367.2,454.9 369.8,469.0 371.9,483.2 373.6,497.4 373.7,511.6 372.3,525.9 369.9,540.2 366.5,554.6 361.8,569.0 355.0,583.4 344.4,597.9 328.7,612.4M296.3,280.2 302.4,292.1 312.5,304.7 319.5,317.7 324.2,330.8 329.7,344.2 336.1,357.7 344.0,371.3 351.2,385.0 357.6,398.8 363.6,412.7 369.1,426.7 373.4,440.7 376.7,454.8 379.5,469.0 381.9,483.2 383.8,497.4 383.8,511.7 382.4,526.0 379.7,540.4 376.1,554.9 371.1,569.3 363.7,583.8 352.2,598.4 335.3,612.9M299.4,280.1 306.0,291.8 316.9,304.3 324.4,317.2 329.5,330.4 335.5,343.7 342.4,357.2 350.9,370.8 358.6,384.5 365.6,398.3 372.0,412.2 378.0,426.2 382.7,440.3 386.2,454.4 389.3,468.6 391.9,482.8 393.9,497.1 394.0,511.5 392.5,525.8 389.6,540.3 385.8,554.8 380.3,569.3 372.4,583.9 360.1,598.5 341.8,613.1M302.4,279.4 309.5,290.9 321.2,303.4 329.3,316.3 334.8,329.4 341.2,342.7 348.6,356.2 357.7,369.8 366.0,383.5 373.5,397.3 380.5,411.3 386.8,425.3 391.9,439.4 395.7,453.5 399.0,467.7 401.8,482.0 404.0,496.4 404.1,510.8 402.5,525.2 399.5,539.7 395.4,554.3 389.6,568.9 381.1,583.5 367.9,598.2 348.4,612.9M305.3,278.2 312.9,289.6 325.4,302.0 334.0,314.8 339.9,327.9 346.7,341.2 354.7,354.7 364.4,368.3 373.3,382.0 381.3,395.9 388.8,409.8 395.6,423.8 401.0,438.0 405.1,452.2 408.7,466.4 411.7,480.8 414.0,495.2 414.2,509.6 412.5,524.1 409.3,538.7 404.9,553.3 398.8,568.0 389.7,582.7 375.7,597.4 354.9,612.2M308.0,276.6 316.1,287.9 329.4,300.2 338.5,313.0 344.9,326.0 352.1,339.3 360.6,352.8 371.0,366.4 380.5,380.2 389.0,394.0 396.9,408.0 404.2,422.1 410.0,436.2 414.4,450.4 418.2,464.8 421.4,479.1 423.9,493.6 424.2,508.1 422.4,522.7 419.0,537.3 414.4,552.0 407.9,566.7 398.3,581.5 383.4,596.3 361.4,611.2M310.5,274.8 319.1,286.0 333.2,298.2 343.0,310.9 349.7,324.0 357.4,337.2 366.4,350.7 377.4,364.3 387.5,378.0 396.6,391.9 405.0,405.9 412.7,420.0 418.9,434.2 423.6,448.4 427.6,462.8 431.1,477.2 433.8,491.7 434.1,506.3 432.2,520.9 428.6,535.6 423.8,550.3 417.0,565.1 406.8,580.0 391.1,594.9 367.8,609.8M312.8,272.7 321.9,283.7 336.8,295.9 347.1,308.5 354.3,321.5 362.4,334.8 372.0,348.2 383.7,361.8 394.3,375.6 403.9,389.5 412.9,403.5 421.0,417.6 427.6,431.8 432.6,446.1 436.9,460.5 440.6,475.0 443.5,489.5 443.8,504.1 441.9,518.8 438.2,533.5 433.1,548.3 425.9,563.2 415.2,578.1 398.7,593.1 374.2,608.1M315.0,270.5 324.6,281.3 340.3,293.4 351.2,306.0 358.7,318.9 367.4,332.2 377.4,345.6 389.8,359.2 401.1,372.9 411.2,386.8 420.6,400.8 429.3,415.0 436.2,429.2 441.5,443.5 446.1,457.9 450.0,472.4 453.0,487.0 453.4,501.7 451.4,516.4 447.6,531.2 442.3,546.0 434.7,560.9 423.6,575.9 406.2,590.9 380.4,606.0M313.9,271.6 323.3,282.5 338.6,294.7 349.2,307.3 356.5,320.2 364.9,333.5 374.7,346.9 386.7,360.5 397.7,374.3 407.6,388.1 416.8,402.2 425.2,416.3 431.9,430.5 437.0,444.8 441.5,459.2 445.3,473.7 448.3,488.3 448.6,502.9 446.7,517.6 442.9,532.4 437.7,547.2 430.3,562.1 419.4,577.0 402.5,592.0 377.3,607.1M314.6,270.9 324.1,281.8 339.6,293.9 350.4,306.5 357.8,319.5 366.4,332.7 376.3,346.1 388.5,359.7 399.7,373.5 409.7,387.3 419.1,401.4 427.6,415.5 434.5,429.7 439.7,444.1 444.3,458.5 448.1,473.0 451.1,487.5 451.5,502.2 449.5,516.9 445.7,531.7 440.4,546.5 433.0,561.4 421.9,576.4 404.7,591.4 379.2,606.4M257.8,321.4 258.0,339.4 258.3,357.0 258.5,374.3 258.8,391.3 259.0,408.1 259.2,424.7 259.3,441.2 259.4,457.5 259.5,473.7 259.5,489.7 259.5,505.7 259.4,521.6 259.3,537.4 259.1,553.1 258.7,568.7 258.2,584.3M260.0,321.3 260.5,339.4 261.0,357.0 261.6,374.3 262.2,391.4 262.7,408.3 263.1,424.9 263.4,441.5 263.6,457.9 263.8,474.1 263.9,490.3 263.8,506.3 263.6,522.3 263.3,538.2 262.9,554.0 262.1,569.7 260.9,585.4M256.0,287.2 260.2,286.9 264.4,286.6 268.7,286.4 272.9,286.4 277.1,286.6 281.3,287.1 285.4,287.6 289.6,288.0 293.9,288.3 298.1,288.4 302.3,288.3 306.5,287.4 310.4,285.7 314.1,283.5 317.4,280.9 320.5,277.9M256.0,296.3 260.9,296.0 265.8,295.7 270.6,295.5 275.5,295.5 280.4,295.7 285.2,296.2 290.1,296.6 294.9,297.0 299.8,297.2 304.8,297.2 309.7,297.0 314.5,296.0 319.1,294.2 323.5,292.0 327.5,289.2 331.3,286.2M256.0,305.4 261.5,305.1 267.1,304.8 272.6,304.7 278.1,304.6 283.7,304.9 289.2,305.3 294.7,305.8 300.2,306.1 305.8,306.3 311.3,306.3 316.9,305.9 322.5,304.9 327.7,303.1 332.8,300.8 337.5,298.0 342.0,294.9M256.0,314.4 262.0,314.2 268.0,313.9 274.0,313.8 280.0,313.8 286.0,314.1 292.0,314.6 298.0,315.0 304.0,315.4 310.0,315.5 316.1,315.4 322.2,315.1 328.2,314.0 334.0,312.1 339.5,309.7 344.8,306.9 349.8,303.8M256.0,323.5 262.3,323.2 268.7,323.1 275.0,323.0 281.3,323.1 287.6,323.4 293.9,323.9 300.2,324.4 306.6,324.7 313.0,324.8 319.4,324.7 325.8,324.3 332.2,323.2 338.3,321.3 344.2,318.9 349.8,316.0 355.1,312.8M256.0,332.5 262.7,332.3 269.3,332.2 276.0,332.2 282.6,332.3 289.3,332.7 295.9,333.2 302.5,333.8 309.2,334.1 316.0,334.2 322.7,334.1 329.5,333.7 336.2,332.5 342.7,330.6 349.0,328.2 354.9,325.2 360.7,322.0M256.0,341.5 263.1,341.4 270.1,341.4 277.1,341.4 284.1,341.6 291.1,342.0 298.1,342.6 305.1,343.2 312.2,343.6 319.3,343.6 326.5,343.5 333.7,343.1 340.8,341.9 347.6,340.0 354.3,337.5 360.7,334.6 366.8,331.4M256.0,350.5 263.5,350.5 270.9,350.5 278.3,350.7 285.7,350.9 293.2,351.4 300.6,352.1 308.0,352.7 315.5,353.1 323.0,353.2 330.6,353.1 338.2,352.6 345.7,351.4 353.1,349.4 360.2,347.0 367.0,344.1 373.6,340.8M256.0,359.5 264.0,359.6 271.9,359.7 279.8,359.9 287.7,360.3 295.6,360.8 303.5,361.5 311.4,362.2 319.4,362.6 327.5,362.7 335.6,362.6 343.7,362.1 351.7,361.0 359.6,359.0 367.2,356.6 374.6,353.6 381.7,350.4M256.0,368.5 264.5,368.6 273.0,368.8 281.4,369.2 289.8,369.6 298.3,370.2 306.7,371.0 315.1,371.8 323.7,372.2 332.3,372.4 341.0,372.3 349.6,371.8 358.2,370.6 366.6,368.6 374.8,366.2 382.8,363.3 390.5,360.0M256.0,377.5 265.0,377.7 273.9,378.0 282.9,378.5 291.8,379.0 300.7,379.7 309.6,380.6 318.6,381.4 327.6,381.9 336.7,382.0 345.9,381.9 355.1,381.4 364.2,380.3 373.1,378.3 381.8,375.9 390.3,373.0 398.5,369.7M256.0,386.5 265.4,386.8 274.8,387.2 284.2,387.8 293.5,388.4 302.9,389.2 312.3,390.1 321.7,391.0 331.2,391.6 340.8,391.7 350.4,391.7 360.0,391.2 369.6,390.0 379.0,388.1 388.2,385.7 397.2,382.7 405.9,379.4M256.0,395.5 265.9,395.9 275.7,396.4 285.5,397.1 295.2,397.8 305.0,398.7 314.8,399.7 324.6,400.7 334.6,401.3 344.6,401.5 354.7,401.4 364.8,400.9 374.8,399.8 384.6,397.9 394.3,395.5 403.7,392.6 412.9,389.3M256.0,404.5 266.3,405.0 276.5,405.6 286.7,406.4 296.8,407.2 307.0,408.2 317.2,409.3 327.4,410.4 337.8,411.0 348.2,411.2 358.7,411.2 369.2,410.8 379.7,409.6 390.0,407.7 400.1,405.3 409.9,402.4 419.6,399.2M256.0,413.4 266.7,414.0 277.3,414.8 287.8,415.7 298.3,416.6 308.9,417.7 319.5,418.9 330.1,420.1 340.8,420.8 351.7,421.1 362.5,421.1 373.4,420.6 384.3,419.5 395.0,417.6 405.5,415.3 415.8,412.4 425.9,409.1M256.0,422.4 267.0,423.1 277.9,424.0 288.8,425.0 299.7,426.1 310.6,427.3 321.5,428.6 332.4,429.8 343.5,430.6 354.7,430.9 366.0,430.9 377.2,430.5 388.5,429.4 399.5,427.6 410.4,425.2 421.1,422.4 431.5,419.1M256.0,431.4 267.3,432.2 278.5,433.2 289.6,434.3 300.8,435.5 312.0,436.8 323.1,438.2 334.4,439.5 345.7,440.4 357.2,440.8 368.8,440.8 380.3,440.4 391.9,439.4 403.2,437.5 414.4,435.3 425.4,432.4 436.2,429.2M256.0,440.3 267.5,441.3 278.9,442.4 290.3,443.7 301.7,445.0 313.1,446.4 324.5,447.9 335.9,449.3 347.5,450.3 359.3,450.7 371.0,450.7 382.9,450.4 394.6,449.3 406.3,447.6 417.7,445.3 429.0,442.5 440.0,439.3M256.0,449.3 267.7,450.3 279.3,451.6 290.9,453.0 302.5,454.5 314.1,456.0 325.7,457.6 337.3,459.1 349.1,460.1 361.1,460.6 373.1,460.7 385.1,460.4 397.1,459.4 409.0,457.6 420.7,455.4 432.2,452.6 443.5,449.5M256.0,458.3 267.9,459.4 279.7,460.8 291.4,462.3 303.2,464.0 315.0,465.6 326.7,467.3 338.6,468.9 350.6,470.0 362.7,470.5 374.9,470.7 387.2,470.4 399.4,469.4 411.4,467.7 423.4,465.5 435.1,462.8 446.6,459.7M256.0,467.2 268.1,468.5 280.0,470.0 291.9,471.7 303.8,473.4 315.7,475.2 327.6,477.0 339.6,478.7 351.8,479.9 364.2,480.5 376.5,480.7 389.0,480.4 401.3,479.5 413.6,477.8 425.7,475.7 437.6,473.0 449.3,469.9M256.0,476.2 268.2,477.6 280.3,479.2 292.3,481.1 304.3,482.9 316.4,484.8 328.5,486.8 340.6,488.6 353.0,489.8 365.4,490.5 378.0,490.7 390.6,490.5 403.1,489.6 415.5,488.0 427.8,485.9 439.9,483.2 451.8,480.2M256.0,485.1 268.3,486.6 280.5,488.4 292.6,490.4 304.7,492.4 316.8,494.4 329.0,496.5 341.2,498.4 353.7,499.8 366.2,500.5 378.9,500.8 391.6,500.6 404.2,499.8 416.8,498.2 429.2,496.1 441.4,493.5 453.4,490.5M256.0,494.1 268.3,495.7 280.5,497.6 292.5,499.8 304.6,502.0 316.8,504.1 328.9,506.3 341.1,508.3 353.6,509.8 366.2,510.5 378.8,510.9 391.5,510.7 404.2,509.9 416.8,508.4 429.2,506.4 441.4,503.8 453.5,500.8M256.0,503.0 268.2,504.8 280.3,506.9 292.3,509.2 304.3,511.5 316.3,513.7 328.4,516.1 340.5,518.2 352.9,519.7 365.4,520.6 378.0,521.0 390.6,520.8 403.2,520.1 415.7,518.6 428.1,516.7 440.3,514.2 452.3,511.2M256.0,511.9 268.1,513.9 280.0,516.1 291.8,518.5 303.7,521.0 315.6,523.4 327.5,525.9 339.5,528.1 351.7,529.7 364.1,530.6 376.6,531.1 389.1,531.0 401.6,530.3 414.0,528.9 426.3,527.0 438.4,524.5 450.3,521.6M256.0,520.9 267.9,523.0 279.6,525.3 291.2,527.9 302.9,530.5 314.6,533.1 326.3,535.7 338.1,538.0 350.1,539.7 362.3,540.7 374.6,541.2 386.9,541.2 399.3,540.6 411.5,539.2 423.6,537.4 435.5,534.9 447.3,532.1M256.0,529.8 267.6,532.0 279.1,534.5 290.5,537.3 301.9,540.1 313.3,542.7 324.8,545.5 336.4,547.9 348.2,549.8 360.2,550.8 372.2,551.4 384.3,551.4 396.4,550.8 408.4,549.5 420.4,547.7 432.1,545.4 443.7,542.5M256.0,538.8 267.3,541.1 278.5,543.8 289.6,546.7 300.7,549.6 311.8,552.4 323.0,555.3 334.2,557.9 345.8,559.8 357.5,560.9 369.3,561.6 381.1,561.6 392.9,561.1 404.6,559.9 416.3,558.2 427.8,555.8 439.1,553.0M256.0,547.7 266.9,550.2 277.7,553.0 288.4,556.1 299.1,559.2 309.9,562.1 320.6,565.1 331.5,567.8 342.6,569.9 354.0,571.1 365.4,571.8 376.9,571.9 388.3,571.4 399.7,570.3 411.0,568.6 422.1,566.3 433.1,563.6M256.0,556.6 266.4,559.3 276.7,562.2 286.9,565.5 297.0,568.8 307.3,571.8 317.6,575.0 327.9,577.8 338.6,579.9 349.4,581.2 360.3,582.0 371.3,582.2 382.3,581.8 393.2,580.7 404.0,579.0 414.7,576.8 425.2,574.1M256.0,565.5 265.7,568.3 275.3,571.5 284.8,574.9 294.2,578.3 303.8,581.5 313.3,584.8 323.0,587.8 332.9,590.0 343.1,591.4 353.4,592.2 363.6,592.4 373.9,592.1 384.2,591.1 394.3,589.5 404.3,587.4 414.2,584.7M256.0,574.5 264.8,577.4 273.5,580.7 282.0,584.3 290.6,587.9 299.2,591.3 307.8,594.7 316.6,597.8 325.7,600.1 334.9,601.6 344.3,602.5 353.7,602.8 363.1,602.5 372.5,601.5 381.7,600.0 390.9,597.9 399.9,595.4M256.0,578.9 264.3,582.0 272.4,585.3 280.4,589.0 288.4,592.7 296.5,596.1 304.6,599.6 312.9,602.8 321.4,605.2 330.1,606.7 339.0,607.6 347.8,607.9 356.7,607.7 365.6,606.7 374.3,605.3 382.9,603.2 391.4,600.7M256.0,278.0 256.0,363.3 256.0,439.4 256.0,512.4 256.0,583.4" fill="none" stroke="#4a4a4a" stroke-width="0.8"/></g>
<path d="M256.0,278.0 L254.2,277.9 L251.8,277.8 L248.9,277.6 L245.9,277.5 L242.8,277.4 L240.0,277.5 L237.4,277.7 L234.9,278.0 L232.3,278.4 L229.8,278.9 L227.4,279.2 L225.0,279.5 L222.7,279.7 L220.4,279.9 L218.1,280.1 L216.0,280.2 L213.9,280.2 L212.0,280.0 L210.2,279.6 L208.6,279.1 L207.1,278.4 L205.6,277.6 L204.3,276.8 L203.0,276.0 L201.8,275.1 L200.6,274.1 L199.4,273.0 L198.4,272.0 L197.6,271.1 L197.0,270.5 L196.4,271.4 L195.6,272.6 L194.6,274.0 L193.5,275.6 L192.3,277.1 L191.0,278.5 L189.6,279.7 L188.2,280.8 L186.6,281.9 L184.9,283.0 L183.1,284.4 L181.0,286.0 L178.6,287.9 L176.0,289.9 L173.2,292.2 L170.3,294.6 L167.6,297.2 L165.0,300.0 L162.7,303.1 L160.5,306.5 L158.4,310.1 L156.3,313.7 L154.2,317.4 L152.0,321.0 L149.7,324.5 L147.3,328.1 L144.9,331.7 L142.5,335.2 L140.0,338.7 L137.5,342.0 L134.9,345.2 L132.1,348.3 L129.4,351.3 L126.6,354.3 L124.0,357.2 L121.5,360.0 L119.3,362.6 L117.2,365.1 L115.2,367.5 L113.3,369.9 L111.2,372.5 L109.0,375.5 L106.5,378.8 L103.9,382.5 L101.2,386.3 L98.4,390.2 L95.8,394.1 L93.2,398.0 L90.7,401.8 L88.3,405.6 L85.9,409.5 L83.6,413.3 L81.5,417.2 L79.5,421.0 L77.7,424.8 L76.1,428.6 L74.6,432.3 L73.2,436.1 L71.8,439.8 L70.5,443.6 L69.2,447.4 L68.0,451.2 L66.8,454.9 L65.7,458.7 L64.6,462.6 L63.6,466.4 L62.6,470.3 L61.6,474.3 L60.6,478.3 L59.7,482.3 L59.1,486.2 L58.6,490.0 L58.4,493.7 L58.4,497.3 L58.5,500.9 L58.8,504.4 L59.2,507.9 L59.7,511.5 L60.3,515.1 L61.0,518.7 L61.9,522.3 L62.8,525.8 L63.9,529.4 L65.0,533.0 L66.2,536.6 L67.5,540.2 L68.8,543.8 L70.3,547.4 L71.9,551.0 L73.6,554.4 L75.4,557.8 L77.3,561.1 L79.4,564.4 L81.6,567.6 L83.9,570.7 L86.5,573.8 L89.3,576.8 L92.3,579.8 L95.4,582.7 L98.7,585.5 L102.2,588.3 L105.9,591.0 L109.7,593.7 L113.8,596.5 L117.9,599.1 L122.3,601.7 L126.9,604.0 L131.6,606.0 L136.6,607.7 L141.9,609.3 L147.3,610.6 L152.9,611.6 L158.5,612.4 L163.9,612.9 L169.3,613.1 L174.8,613.0 L180.3,612.7 L185.8,612.1 L191.0,611.3 L196.0,610.3 L200.7,609.0 L205.3,607.3 L209.6,605.5 L213.8,603.5 L217.9,601.5 L221.9,599.6 L225.8,597.7 L229.7,595.8 L233.4,593.9 L237.0,592.0 L240.3,590.3 L243.3,588.8 L246.1,587.5 L248.6,586.4 L251.0,585.4 L253.0,584.6 L254.7,583.9 L256.0,583.4 L257.3,583.9 L259.0,584.6 L261.0,585.4 L263.4,586.4 L265.9,587.5 L268.7,588.8 L271.7,590.3 L275.0,592.0 L278.6,593.9 L282.3,595.8 L286.2,597.7 L290.1,599.6 L294.1,601.5 L298.2,603.5 L302.4,605.5 L306.7,607.3 L311.3,609.0 L316.0,610.3 L321.0,611.3 L326.2,612.1 L331.6,612.7 L337.2,613.0 L342.7,613.1 L348.1,612.9 L353.5,612.4 L359.1,611.6 L364.6,610.6 L370.1,609.3 L375.4,607.7 L380.4,606.0 L385.1,604.0 L389.7,601.7 L394.1,599.1 L398.2,596.5 L402.3,593.7 L406.1,591.0 L409.8,588.3 L413.3,585.5 L416.6,582.7 L419.7,579.8 L422.7,576.8 L425.5,573.8 L428.1,570.7 L430.4,567.6 L432.6,564.4 L434.7,561.1 L436.6,557.8 L438.4,554.4 L440.1,551.0 L441.7,547.4 L443.2,543.8 L444.5,540.2 L445.8,536.6 L447.0,533.0 L448.1,529.4 L449.2,525.8 L450.1,522.3 L451.0,518.7 L451.7,515.1 L452.3,511.5 L452.8,507.9 L453.2,504.4 L453.5,500.9 L453.6,497.3 L453.6,493.7 L453.4,490.0 L452.9,486.2 L452.3,482.3 L451.4,478.3 L450.4,474.3 L449.4,470.3 L448.4,466.4 L447.4,462.6 L446.3,458.7 L445.2,454.9 L444.0,451.2 L442.8,447.4 L441.5,443.6 L440.2,439.8 L438.8,436.1 L437.4,432.3 L435.9,428.6 L434.3,424.8 L432.5,421.0 L430.5,417.2 L428.4,413.3 L426.1,409.5 L423.7,405.6 L421.3,401.8 L418.8,398.0 L416.3,394.1 L413.6,390.2 L410.8,386.3 L408.1,382.5 L405.5,378.8 L403.0,375.5 L400.8,372.5 L398.7,369.9 L396.8,367.5 L394.8,365.1 L392.7,362.6 L390.5,360.0 L388.0,357.2 L385.4,354.3 L382.6,351.3 L379.9,348.3 L377.1,345.2 L374.5,342.0 L372.0,338.7 L369.5,335.2 L367.1,331.7 L364.7,328.1 L362.3,324.5 L360.0,321.0 L357.8,317.4 L355.7,313.7 L353.6,310.1 L351.5,306.5 L349.3,303.1 L347.0,300.0 L344.4,297.2 L341.7,294.6 L338.8,292.2 L336.0,289.9 L333.4,287.9 L331.0,286.0 L328.9,284.4 L327.1,283.0 L325.4,281.9 L323.8,280.8 L322.4,279.7 L321.0,278.5 L319.7,277.1 L318.5,275.6 L317.4,274.0 L316.4,272.6 L315.6,271.4 L315.0,270.5 L314.4,271.1 L313.6,272.0 L312.6,273.0 L311.4,274.1 L310.2,275.1 L309.0,276.0 L307.7,276.8 L306.4,277.6 L304.9,278.4 L303.4,279.1 L301.8,279.6 L300.0,280.0 L298.1,280.2 L296.0,280.2 L293.9,280.1 L291.6,279.9 L289.3,279.7 L287.0,279.5 L284.6,279.2 L282.2,278.9 L279.7,278.4 L277.1,278.0 L274.6,277.7 L272.0,277.5 L269.2,277.4 L266.1,277.5 L263.1,277.6 L260.2,277.8 L257.8,277.9 L256.0,278.0Z" fill="none" stroke="#444" stroke-width="0.8"/>
<mask id="rm1" maskUnits="userSpaceOnUse" x="0" y="0" width="1024" height="748"><path d="M44.5,228.0 44.5,228.7 44.5,229.5 44.5,230.3 44.4,231.4 44.4,232.8 44.4,234.6 44.5,237.0 44.5,240.0 44.6,243.9 44.6,248.8 44.7,254.3 44.8,260.1 45.0,266.1 45.1,271.9 45.3,277.3 45.5,282.0 45.7,285.8 46.0,288.9 46.3,291.6 46.7,294.1 47.0,296.8 47.4,299.8 47.7,303.4 48.0,308.0 48.3,313.6 48.6,319.9 48.9,326.9 49.1,334.2 49.4,341.8 49.7,349.4 50.0,356.9 50.3,364.0 50.6,371.1 51.0,378.4 51.4,385.9 51.7,393.2 52.1,400.3 52.4,406.9 52.7,412.9 53.0,418.0 53.2,422.3 53.4,425.9 53.5,428.9 53.7,431.4 53.8,433.5 53.9,435.2 53.9,436.7 54.0,438.0" fill="none" stroke="#fff" stroke-width="18" stroke-linecap="round" stroke-linejoin="round"/></mask>
<path d="M44.5,228.0 44.5,228.7 44.5,229.5 44.5,230.3 44.4,231.4 44.4,232.8 44.4,234.6 44.5,237.0 44.5,240.0 44.6,243.9 44.6,248.8 44.7,254.3 44.8,260.1 45.0,266.1 45.1,271.9 45.3,277.3 45.5,282.0 45.7,285.8 46.0,288.9 46.3,291.6 46.7,294.1 47.0,296.8 47.4,299.8 47.7,303.4 48.0,308.0 48.3,313.6 48.6,319.9 48.9,326.9 49.1,334.2 49.4,341.8 49.7,349.4 50.0,356.9 50.3,364.0 50.6,371.1 51.0,378.4 51.4,385.9 51.7,393.2 52.1,400.3 52.4,406.9 52.7,412.9 53.0,418.0 53.2,422.3 53.4,425.9 53.5,428.9 53.7,431.4 53.8,433.5 53.9,435.2 53.9,436.7 54.0,438.0" fill="none" stroke="#5b5b5b" stroke-width="19" stroke-linecap="round" stroke-linejoin="round"/>
<path d="M34.2,182.8L55.0,219.2M34.2,191.8L55.0,228.2M34.1,200.8L55.0,237.2M34.1,209.8L54.9,246.2M33.7,219.1L55.3,255.2M33.8,228.3L55.4,264.3M33.9,237.4L55.6,273.4M34.0,246.7L55.9,282.5M33.9,256.0L56.4,291.4M33.4,265.7L57.7,300.0M33.8,275.1L59.0,308.8M35.7,283.6L59.2,318.4M36.8,292.5L59.5,327.8M37.3,301.5L59.8,337.0M37.7,310.6L60.1,346.2M38.1,319.8L60.4,355.3M38.4,328.9L60.8,364.4M38.7,338.1L61.2,373.5M39.0,347.3L61.7,382.6M39.4,356.4L62.2,391.7M39.8,365.6L62.6,400.8M40.3,374.7L63.1,410.0M40.7,383.9L63.6,419.1M41.2,393.0L64.0,428.2M41.7,402.1L64.5,437.4M42.1,411.2L64.9,446.5M42.6,420.2L65.4,455.5M43.0,429.2L65.8,464.5M43.5,438.2L66.3,473.5" stroke="#434343" stroke-width="1.8" fill="none" mask="url(#rm1)"/>
<mask id="rm2" maskUnits="userSpaceOnUse" x="0" y="0" width="1024" height="748"><path d="M69.0,188.0 69.0,188.5 69.1,188.7 69.1,189.0 69.1,189.5 69.2,190.4 69.3,192.0 69.3,194.5 69.4,198.0 69.5,202.8 69.6,208.8 69.6,215.7 69.7,223.2 69.8,231.1 69.9,239.1 70.1,246.8 70.2,254.0 70.3,260.8 70.4,267.6 70.5,274.3 70.7,281.0 70.8,287.7 71.0,294.4 71.3,301.2 71.6,308.0 72.0,315.1 72.5,322.5 73.1,330.1 73.7,337.7 74.3,345.0 74.9,352.0 75.5,358.4 76.0,364.0 76.4,368.9 76.9,373.4 77.3,377.4 77.6,381.0 78.0,384.1 78.3,386.8 78.5,389.1 78.7,391.0" fill="none" stroke="#fff" stroke-width="18" stroke-linecap="round" stroke-linejoin="round"/></mask>
<path d="M69.0,188.0 69.0,188.5 69.1,188.7 69.1,189.0 69.1,189.5 69.2,190.4 69.3,192.0 69.3,194.5 69.4,198.0 69.5,202.8 69.6,208.8 69.6,215.7 69.7,223.2 69.8,231.1 69.9,239.1 70.1,246.8 70.2,254.0 70.3,260.8 70.4,267.6 70.5,274.3 70.7,281.0 70.8,287.7 71.0,294.4 71.3,301.2 71.6,308.0 72.0,315.1 72.5,322.5 73.1,330.1 73.7,337.7 74.3,345.0 74.9,352.0 75.5,358.4 76.0,364.0 76.4,368.9 76.9,373.4 77.3,377.4 77.6,381.0 78.0,384.1 78.3,386.8 78.5,389.1 78.7,391.0" fill="none" stroke="#5b5b5b" stroke-width="19" stroke-linecap="round" stroke-linejoin="round"/>
<path d="M56.6,143.3L79.1,178.8M57.0,152.3L79.5,187.7M57.4,161.3L79.9,196.7M57.8,170.3L80.2,205.7M58.6,179.2L80.2,215.3M58.8,188.4L80.3,224.5M58.9,197.7L80.4,233.8M59.0,206.9L80.5,243.0M59.1,216.2L80.6,252.2M59.2,225.4L80.8,261.4M59.3,234.7L81.0,270.7M59.5,243.9L81.1,279.9M59.7,253.2L81.3,289.2M59.7,262.5L81.6,298.3M59.8,271.8L82.0,307.5M59.9,281.2L82.5,316.6M60.0,290.6L83.2,325.6M60.4,300.0L83.9,334.7M60.9,309.3L84.7,343.9M61.6,318.5L85.6,353.0M62.3,327.8L86.4,362.2M63.1,337.0L87.2,371.4M63.9,346.2L88.0,380.6M64.5,355.6L89.1,389.7M65.3,364.9L90.1,398.8M66.3,373.8L91.1,407.7M67.3,382.7L92.0,416.7M68.2,391.7L93.0,425.6" stroke="#434343" stroke-width="1.8" fill="none" mask="url(#rm2)"/>
<mask id="rm3" maskUnits="userSpaceOnUse" x="0" y="0" width="1024" height="748"><path d="M432.5,177.0 432.8,178.7 433.1,180.9 433.6,183.6 434.1,186.6 434.6,189.8 435.1,193.1 435.6,196.6 436.0,200.0 436.4,203.4 436.8,207.0 437.2,210.6 437.6,214.4 438.0,218.3 438.3,222.4 438.7,226.6 439.0,231.0 439.3,235.9 439.6,241.5 439.9,247.4 440.2,253.4 440.4,259.2 440.7,264.4 440.9,268.8 441.0,272.0" fill="none" stroke="#fff" stroke-width="13" stroke-linecap="round" stroke-linejoin="round"/></mask>
<path d="M432.5,177.0 432.8,178.7 433.1,180.9 433.6,183.6 434.1,186.6 434.6,189.8 435.1,193.1 435.6,196.6 436.0,200.0 436.4,203.4 436.8,207.0 437.2,210.6 437.6,214.4 438.0,218.3 438.3,222.4 438.7,226.6 439.0,231.0 439.3,235.9 439.6,241.5 439.9,247.4 440.2,253.4 440.4,259.2 440.7,264.4 440.9,268.8 441.0,272.0" fill="none" stroke="#5a5a5a" stroke-width="14" stroke-linecap="round" stroke-linejoin="round"/>
<path d="M440.0,167.1L422.5,171.5M440.4,169.7L422.9,174.1M440.8,172.2L423.3,176.6M441.3,174.8L423.7,179.2M441.7,177.4L424.2,181.9M442.1,180.0L424.6,184.5M442.5,182.6L425.0,187.1M443.0,185.3L425.4,189.6M443.4,188.0L425.8,192.2M443.8,190.7L426.2,194.8M444.2,193.4L426.6,197.3M444.6,196.1L426.9,199.9M444.9,198.8L427.2,202.4M445.2,201.4L427.5,205.0M445.5,204.1L427.8,207.6M445.8,206.8L428.1,210.2M446.1,209.4L428.4,212.8M446.4,212.1L428.7,215.4M446.7,214.8L428.9,218.0M446.9,217.5L429.2,220.6M447.2,220.2L429.4,223.2M447.4,222.8L429.6,225.8M447.6,225.5L429.8,228.4M447.8,228.2L430.0,231.0M448.0,230.9L430.2,233.6M448.2,233.6L430.3,236.2M448.3,236.3L430.5,238.8M448.5,239.0L430.6,241.5M448.6,241.6L430.7,244.1M448.8,244.3L430.9,246.7M448.9,247.0L431.0,249.4M449.0,249.6L431.1,252.0M449.1,252.3L431.2,254.6M449.3,254.9L431.4,257.3M449.4,257.6L431.5,259.9M449.5,260.2L431.6,262.6M449.6,262.9L431.7,265.2M449.7,265.5L431.8,267.9M449.8,268.2L431.9,270.5M449.9,270.8L432.1,273.1M450.1,273.3L432.2,275.7M450.2,275.9L432.3,278.3" stroke="#474747" stroke-width="1.8" fill="none" mask="url(#rm3)"/>
<mask id="rm4" maskUnits="userSpaceOnUse" x="0" y="0" width="1024" height="748"><path d="M458.0,179.0 458.3,182.1 458.7,186.1 459.1,190.9 459.7,196.2 460.2,202.0 460.8,208.0 461.4,214.1 462.0,220.0 462.7,226.3 463.4,233.4 464.2,241.0 465.0,248.6 465.8,255.8 466.5,262.4 467.1,267.9 467.5,272.0" fill="none" stroke="#fff" stroke-width="17" stroke-linecap="round" stroke-linejoin="round"/></mask>
<path d="M458.0,179.0 458.3,182.1 458.7,186.1 459.1,190.9 459.7,196.2 460.2,202.0 460.8,208.0 461.4,214.1 462.0,220.0 462.7,226.3 463.4,233.4 464.2,241.0 465.0,248.6 465.8,255.8 466.5,262.4 467.1,267.9 467.5,272.0" fill="none" stroke="#5b5b5b" stroke-width="18" stroke-linecap="round" stroke-linejoin="round"/>
<path d="M443.8,135.8L467.0,168.4M444.7,144.8L467.9,177.4M445.5,153.8L468.7,186.3M446.4,162.7L469.6,195.3M447.3,172.0L470.5,204.6M448.2,181.3L471.4,213.9M449.0,190.7L472.4,223.2M449.9,200.0L473.3,232.4M450.8,209.3L474.3,241.7M451.8,218.6L475.3,251.0M452.8,227.9L476.3,260.3M453.7,237.2L477.3,269.6M454.7,246.5L478.3,278.9M455.7,255.5L479.2,287.8M456.6,264.4L480.2,296.8M457.6,273.4L481.2,305.7" stroke="#434343" stroke-width="1.8" fill="none" mask="url(#rm4)"/>
<clipPath id="cc0"><rect x="146.0" y="177.5" width="22.0" height="70.9" rx="11.0"/></clipPath>
<rect x="146.0" y="177.5" width="22.0" height="70.9" rx="11.0" fill="#cfcfcf"/>
<g clip-path="url(#cc0)"><path d="M147.5,177.5V248.4M150.1,177.5V248.4M152.7,177.5V248.4M155.3,177.5V248.4M157.9,177.5V248.4M160.5,177.5V248.4M163.1,177.5V248.4M165.7,177.5V248.4M146.0,180.5H168.0M146.0,185.1H168.0M146.0,189.7H168.0M146.0,194.3H168.0M146.0,198.9H168.0M146.0,203.5H168.0M146.0,208.1H168.0M146.0,212.7H168.0M146.0,217.3H168.0M146.0,221.9H168.0M146.0,226.5H168.0M146.0,231.1H168.0M146.0,235.7H168.0M146.0,240.3H168.0M146.0,244.9H168.0" stroke="#333" stroke-width="0.7" fill="none"/></g>
<rect x="146.5" y="178.0" width="21.0" height="69.9" rx="10.5" fill="none" stroke="#222" stroke-width="1"/>
<clipPath id="cc1"><rect x="182.0" y="172.0" width="23.5" height="80.7" rx="11.8"/></clipPath>
<rect x="182.0" y="172.0" width="23.5" height="80.7" rx="11.8" fill="#ececec"/>
<g clip-path="url(#cc1)"><path d="M183.5,172.0V252.7M185.9,172.0V252.7M188.3,172.0V252.7M190.7,172.0V252.7M193.1,172.0V252.7M195.5,172.0V252.7M197.9,172.0V252.7M200.3,172.0V252.7M202.7,172.0V252.7M205.1,172.0V252.7M182.0,175.0H205.5M182.0,179.2H205.5M182.0,183.4H205.5M182.0,187.6H205.5M182.0,191.8H205.5M182.0,196.0H205.5M182.0,200.2H205.5M182.0,204.4H205.5M182.0,208.6H205.5M182.0,212.8H205.5M182.0,217.0H205.5M182.0,221.2H205.5M182.0,225.4H205.5M182.0,229.6H205.5M182.0,233.8H205.5M182.0,238.0H205.5M182.0,242.2H205.5M182.0,246.4H205.5M182.0,250.6H205.5" stroke="#777" stroke-width="0.55" fill="none"/></g>
<rect x="182.5" y="172.5" width="22.5" height="79.7" rx="11.2" fill="none" stroke="#666" stroke-width="1"/>
<clipPath id="cc2"><rect x="225.0" y="176.4" width="21.8" height="72.0" rx="10.9"/></clipPath>
<rect x="225.0" y="176.4" width="21.8" height="72.0" rx="10.9" fill="#ececec"/>
<g clip-path="url(#cc2)"><path d="M226.5,176.4V248.4M228.9,176.4V248.4M231.3,176.4V248.4M233.7,176.4V248.4M236.1,176.4V248.4M238.5,176.4V248.4M240.9,176.4V248.4M243.3,176.4V248.4M245.7,176.4V248.4M225.0,179.4H246.8M225.0,183.6H246.8M225.0,187.8H246.8M225.0,192.0H246.8M225.0,196.2H246.8M225.0,200.4H246.8M225.0,204.6H246.8M225.0,208.8H246.8M225.0,213.0H246.8M225.0,217.2H246.8M225.0,221.4H246.8M225.0,225.6H246.8M225.0,229.8H246.8M225.0,234.0H246.8M225.0,238.2H246.8M225.0,242.4H246.8M225.0,246.6H246.8" stroke="#777" stroke-width="0.55" fill="none"/></g>
<rect x="225.5" y="176.9" width="20.8" height="71.0" rx="10.4" fill="none" stroke="#666" stroke-width="1"/>
<clipPath id="cc3"><rect x="253.4" y="173.9" width="20.9" height="70.1" rx="10.5"/></clipPath>
<rect x="253.4" y="173.9" width="20.9" height="70.1" rx="10.5" fill="#ececec"/>
<g clip-path="url(#cc3)"><path d="M254.9,173.9V244.0M257.3,173.9V244.0M259.7,173.9V244.0M262.1,173.9V244.0M264.5,173.9V244.0M266.9,173.9V244.0M269.3,173.9V244.0M271.7,173.9V244.0M274.1,173.9V244.0M253.4,176.9H274.3M253.4,181.1H274.3M253.4,185.3H274.3M253.4,189.5H274.3M253.4,193.7H274.3M253.4,197.9H274.3M253.4,202.1H274.3M253.4,206.3H274.3M253.4,210.5H274.3M253.4,214.7H274.3M253.4,218.9H274.3M253.4,223.1H274.3M253.4,227.3H274.3M253.4,231.5H274.3M253.4,235.7H274.3M253.4,239.9H274.3" stroke="#777" stroke-width="0.55" fill="none"/></g>
<rect x="253.9" y="174.4" width="19.9" height="69.1" rx="10.0" fill="none" stroke="#666" stroke-width="1"/>
<clipPath id="cc4"><rect x="290.4" y="173.2" width="22.6" height="79.5" rx="11.3"/></clipPath>
<rect x="290.4" y="173.2" width="22.6" height="79.5" rx="11.3" fill="#ececec"/>
<g clip-path="url(#cc4)"><path d="M291.9,173.2V252.7M294.3,173.2V252.7M296.7,173.2V252.7M299.1,173.2V252.7M301.5,173.2V252.7M303.9,173.2V252.7M306.3,173.2V252.7M308.7,173.2V252.7M311.1,173.2V252.7M290.4,176.2H313.0M290.4,180.4H313.0M290.4,184.6H313.0M290.4,188.8H313.0M290.4,193.0H313.0M290.4,197.2H313.0M290.4,201.4H313.0M290.4,205.6H313.0M290.4,209.8H313.0M290.4,214.0H313.0M290.4,218.2H313.0M290.4,222.4H313.0M290.4,226.6H313.0M290.4,230.8H313.0M290.4,235.0H313.0M290.4,239.2H313.0M290.4,243.4H313.0M290.4,247.6H313.0M290.4,251.8H313.0" stroke="#777" stroke-width="0.55" fill="none"/></g>
<rect x="290.9" y="173.7" width="21.6" height="78.5" rx="10.8" fill="none" stroke="#666" stroke-width="1"/>
<clipPath id="cc5"><rect x="325.8" y="178.6" width="22.6" height="73.4" rx="11.3"/></clipPath>
<rect x="325.8" y="178.6" width="22.6" height="73.4" rx="11.3" fill="#cfcfcf"/>
<g clip-path="url(#cc5)"><path d="M327.3,178.6V252.0M329.9,178.6V252.0M332.5,178.6V252.0M335.1,178.6V252.0M337.7,178.6V252.0M340.3,178.6V252.0M342.9,178.6V252.0M345.5,178.6V252.0M348.1,178.6V252.0M325.8,181.6H348.4M325.8,186.2H348.4M325.8,190.8H348.4M325.8,195.4H348.4M325.8,200.0H348.4M325.8,204.6H348.4M325.8,209.2H348.4M325.8,213.8H348.4M325.8,218.4H348.4M325.8,223.0H348.4M325.8,227.6H348.4M325.8,232.2H348.4M325.8,236.8H348.4M325.8,241.4H348.4M325.8,246.0H348.4M325.8,250.6H348.4" stroke="#333" stroke-width="0.7" fill="none"/></g>
<rect x="326.3" y="179.1" width="21.6" height="72.4" rx="10.8" fill="none" stroke="#222" stroke-width="1"/>
<defs>
<radialGradient id="bodyg" gradientUnits="userSpaceOnUse" cx="830" cy="400" r="230">
<stop offset="0" stop-color="#f8f8f8"/><stop offset="0.6" stop-color="#f0f0f0"/><stop offset="0.85" stop-color="#d8d8d8"/><stop offset="1" stop-color="#b8b8b8"/></radialGradient>
<linearGradient id="leftg" gradientUnits="userSpaceOnUse" x1="665" y1="430" x2="790" y2="365">
<stop offset="0" stop-color="#000" stop-opacity="0.3"/><stop offset="0.5" stop-color="#000" stop-opacity="0.1"/><stop offset="1" stop-color="#000" stop-opacity="0"/></linearGradient>
<linearGradient id="neckg" gradientUnits="userSpaceOnUse" x1="655" y1="212" x2="668" y2="258">
<stop offset="0" stop-color="#e2e2e2"/><stop offset="0.45" stop-color="#c4c4c4"/><stop offset="1" stop-color="#555"/></linearGradient>
<radialGradient id="bulbg" gradientUnits="userSpaceOnUse" cx="703" cy="192" r="22">
<stop offset="0" stop-color="#eaeaea"/><stop offset="0.6" stop-color="#cfcfcf"/><stop offset="1" stop-color="#8a8a8a"/></radialGradient>
<filter id="ish" x="-30%" y="-30%" width="160%" height="160%">
<feOffset in="SourceAlpha" dx="34" dy="-42" result="o"/>
<feGaussianBlur in="o" stdDeviation="40" result="b"/>
<feComposite in="SourceAlpha" in2="b" operator="out" result="s"/>
<feFlood flood-color="#000" flood-opacity="0.95"/>
<feComposite in2="s" operator="in" result="sh"/>
<feGaussianBlur in="SourceAlpha" stdDeviation="9" result="b2"/>
<feComposite in="SourceAlpha" in2="b2" operator="out" result="s2"/>
<feFlood flood-color="#000" flood-opacity="0.45"/>
<feComposite in2="s2" operator="in" result="sh2"/>
<feMerge><feMergeNode in="SourceGraphic"/><feMergeNode in="sh"/><feMergeNode in="sh2"/></feMerge>
</filter>
<linearGradient id="botg" gradientUnits="userSpaceOnUse" x1="790" y1="430" x2="845" y2="612">
<stop offset="0" stop-color="#000" stop-opacity="0"/><stop offset="0.6" stop-color="#000" stop-opacity="0.12"/><stop offset="1" stop-color="#000" stop-opacity="0.38"/></linearGradient>
<filter id="sb" x="-10%" y="-10%" width="120%" height="120%"><feGaussianBlur stdDeviation="3"/></filter>
</defs>
<path d="M654.9,289.6 L655.4,293.2 L656.2,297.9 L657.0,303.7 L658.0,310.1 L658.9,317.0 L659.8,324.0 L660.6,331.4 L661.3,339.5 L662.0,348.0 L662.8,356.7 L663.7,365.3 L664.8,373.8 L666.1,382.1 L667.6,390.3 L669.1,398.6 L670.9,406.8 L672.7,415.1 L674.7,423.3 L676.8,431.5 L678.9,439.6 L681.2,447.7 L683.6,455.9 L686.4,464.3 L689.5,472.8 L693.0,481.8 L696.8,491.1 L701.0,500.6 L705.3,510.0 L709.8,518.9 L714.3,527.2 L718.9,534.8 L723.5,541.9 L728.2,548.5 L733.2,554.9 L738.4,560.9 L744.0,566.8 L750.1,572.6 L756.6,578.2 L763.4,583.5 L770.3,588.5 L777.1,592.8 L783.6,596.5 L790.0,599.3 L796.4,601.4 L802.8,602.9 L808.9,604.0 L814.7,605.0 L820.0,606.0 L824.6,607.0 L828.5,607.8 L832.0,608.5 L835.6,609.0 L839.4,609.3 L844.0,609.6 L849.4,609.7 L855.6,609.8 L862.0,609.7 L868.4,609.4 L874.6,609.0 L880.0,608.4 L884.7,607.6 L889.1,606.6 L893.0,605.5 L896.8,604.2 L900.4,602.7 L904.0,601.0 L907.6,599.1 L911.0,596.9 L914.3,594.5 L917.5,592.0 L920.6,589.4 L923.5,586.8 L926.3,584.1 L928.9,581.3 L931.4,578.4 L933.8,575.5 L936.0,572.7 L938.0,570.0 L939.8,567.5 L941.4,565.2 L942.8,562.9 L944.2,560.6 L945.6,558.4 L947.0,556.0 L948.5,553.6 L950.1,551.1 L951.6,548.5 L953.1,546.0 L954.6,543.5 L956.0,541.0 L957.3,538.7 L958.7,536.6 L959.9,534.5 L961.1,532.3 L962.2,529.7 L963.2,526.6 L964.1,522.8 L964.9,518.4 L965.6,513.7 L966.1,508.8 L966.6,504.2 L966.8,500.0 L966.9,496.4 L966.7,493.2 L966.5,490.3 L966.1,487.2 L965.6,483.9 L965.0,480.0 L964.4,475.6 L963.8,470.7 L963.1,465.6 L962.3,460.3 L961.2,454.9 L959.8,449.4 L958.0,443.8 L956.0,438.0 L953.7,432.0 L951.2,426.1 L948.6,420.2 L946.0,414.6 L943.4,409.2 L940.7,403.9 L937.9,398.8 L935.0,393.7 L931.9,388.6 L928.5,383.4 L924.9,378.1 L921.0,372.8 L917.0,367.5 L912.8,362.2 L908.5,357.0 L904.2,352.0 L899.8,347.2 L895.4,342.5 L891.0,337.9 L886.3,333.4 L881.5,328.9 L876.4,324.3 L871.0,319.6 L865.3,314.8 L859.5,310.0 L853.5,305.3 L847.6,300.7 L841.7,296.5 L835.9,292.6 L830.1,288.9 L824.4,285.4 L818.6,282.1 L812.8,278.8 L807.0,275.6 L801.2,272.5 L795.3,269.5 L789.5,266.6 L783.6,263.7 L777.8,260.9 L772.0,258.0 L766.2,254.8 L760.5,251.3 L754.8,247.8 L749.1,244.6 L743.3,242.2 L737.4,240.9 L731.2,240.8 L724.9,241.7 L718.4,243.3 L712.0,245.3 L705.8,247.7 L700.0,250.0 L694.4,252.4 L688.9,255.2 L683.6,258.2 L678.6,261.4 L674.1,264.7 L670.0,268.0 L666.4,271.6 L663.3,275.7 L660.6,279.9 L658.3,283.9 L656.4,287.2 L654.9,289.6Z" fill="url(#bodyg)" filter="url(#ish)"/>
<path d="M654.9,289.6 L655.4,293.2 L656.2,297.9 L657.0,303.7 L658.0,310.1 L658.9,317.0 L659.8,324.0 L660.6,331.4 L661.3,339.5 L662.0,348.0 L662.8,356.7 L663.7,365.3 L664.8,373.8 L666.1,382.1 L667.6,390.3 L669.1,398.6 L670.9,406.8 L672.7,415.1 L674.7,423.3 L676.8,431.5 L678.9,439.6 L681.2,447.7 L683.6,455.9 L686.4,464.3 L689.5,472.8 L693.0,481.8 L696.8,491.1 L701.0,500.6 L705.3,510.0 L709.8,518.9 L714.3,527.2 L718.9,534.8 L723.5,541.9 L728.2,548.5 L733.2,554.9 L738.4,560.9 L744.0,566.8 L750.1,572.6 L756.6,578.2 L763.4,583.5 L770.3,588.5 L777.1,592.8 L783.6,596.5 L790.0,599.3 L796.4,601.4 L802.8,602.9 L808.9,604.0 L814.7,605.0 L820.0,606.0 L824.6,607.0 L828.5,607.8 L832.0,608.5 L835.6,609.0 L839.4,609.3 L844.0,609.6 L849.4,609.7 L855.6,609.8 L862.0,609.7 L868.4,609.4 L874.6,609.0 L880.0,608.4 L884.7,607.6 L889.1,606.6 L893.0,605.5 L896.8,604.2 L900.4,602.7 L904.0,601.0 L907.6,599.1 L911.0,596.9 L914.3,594.5 L917.5,592.0 L920.6,589.4 L923.5,586.8 L926.3,584.1 L928.9,581.3 L931.4,578.4 L933.8,575.5 L936.0,572.7 L938.0,570.0 L939.8,567.5 L941.4,565.2 L942.8,562.9 L944.2,560.6 L945.6,558.4 L947.0,556.0 L948.5,553.6 L950.1,551.1 L951.6,548.5 L953.1,546.0 L954.6,543.5 L956.0,541.0 L957.3,538.7 L958.7,536.6 L959.9,534.5 L961.1,532.3 L962.2,529.7 L963.2,526.6 L964.1,522.8 L964.9,518.4 L965.6,513.7 L966.1,508.8 L966.6,504.2 L966.8,500.0 L966.9,496.4 L966.7,493.2 L966.5,490.3 L966.1,487.2 L965.6,483.9 L965.0,480.0 L964.4,475.6 L963.8,470.7 L963.1,465.6 L962.3,460.3 L961.2,454.9 L959.8,449.4 L958.0,443.8 L956.0,438.0 L953.7,432.0 L951.2,426.1 L948.6,420.2 L946.0,414.6 L943.4,409.2 L940.7,403.9 L937.9,398.8 L935.0,393.7 L931.9,388.6 L928.5,383.4 L924.9,378.1 L921.0,372.8 L917.0,367.5 L912.8,362.2 L908.5,357.0 L904.2,352.0 L899.8,347.2 L895.4,342.5 L891.0,337.9 L886.3,333.4 L881.5,328.9 L876.4,324.3 L871.0,319.6 L865.3,314.8 L859.5,310.0 L853.5,305.3 L847.6,300.7 L841.7,296.5 L835.9,292.6 L830.1,288.9 L824.4,285.4 L818.6,282.1 L812.8,278.8 L807.0,275.6 L801.2,272.5 L795.3,269.5 L789.5,266.6 L783.6,263.7 L777.8,260.9 L772.0,258.0 L766.2,254.8 L760.5,251.3 L754.8,247.8 L749.1,244.6 L743.3,242.2 L737.4,240.9 L731.2,240.8 L724.9,241.7 L718.4,243.3 L712.0,245.3 L705.8,247.7 L700.0,250.0 L694.4,252.4 L688.9,255.2 L683.6,258.2 L678.6,261.4 L674.1,264.7 L670.0,268.0 L666.4,271.6 L663.3,275.7 L660.6,279.9 L658.3,283.9 L656.4,287.2 L654.9,289.6Z" fill="url(#botg)"/>
<path d="M654.9,289.6 L655.4,293.2 L656.2,297.9 L657.0,303.7 L658.0,310.1 L658.9,317.0 L659.8,324.0 L660.6,331.4 L661.3,339.5 L662.0,348.0 L662.8,356.7 L663.7,365.3 L664.8,373.8 L666.1,382.1 L667.6,390.3 L669.1,398.6 L670.9,406.8 L672.7,415.1 L674.7,423.3 L676.8,431.5 L678.9,439.6 L681.2,447.7 L683.6,455.9 L686.4,464.3 L689.5,472.8 L693.0,481.8 L696.8,491.1 L701.0,500.6 L705.3,510.0 L709.8,518.9 L714.3,527.2 L718.9,534.8 L723.5,541.9 L728.2,548.5 L733.2,554.9 L738.4,560.9 L744.0,566.8 L750.1,572.6 L756.6,578.2 L763.4,583.5 L770.3,588.5 L777.1,592.8 L783.6,596.5 L790.0,599.3 L796.4,601.4 L802.8,602.9 L808.9,604.0 L814.7,605.0 L820.0,606.0 L824.6,607.0 L828.5,607.8 L832.0,608.5 L835.6,609.0 L839.4,609.3 L844.0,609.6 L849.4,609.7 L855.6,609.8 L862.0,609.7 L868.4,609.4 L874.6,609.0 L880.0,608.4 L884.7,607.6 L889.1,606.6 L893.0,605.5 L896.8,604.2 L900.4,602.7 L904.0,601.0 L907.6,599.1 L911.0,596.9 L914.3,594.5 L917.5,592.0 L920.6,589.4 L923.5,586.8 L926.3,584.1 L928.9,581.3 L931.4,578.4 L933.8,575.5 L936.0,572.7 L938.0,570.0 L939.8,567.5 L941.4,565.2 L942.8,562.9 L944.2,560.6 L945.6,558.4 L947.0,556.0 L948.5,553.6 L950.1,551.1 L951.6,548.5 L953.1,546.0 L954.6,543.5 L956.0,541.0 L957.3,538.7 L958.7,536.6 L959.9,534.5 L961.1,532.3 L962.2,529.7 L963.2,526.6 L964.1,522.8 L964.9,518.4 L965.6,513.7 L966.1,508.8 L966.6,504.2 L966.8,500.0 L966.9,496.4 L966.7,493.2 L966.5,490.3 L966.1,487.2 L965.6,483.9 L965.0,480.0 L964.4,475.6 L963.8,470.7 L963.1,465.6 L962.3,460.3 L961.2,454.9 L959.8,449.4 L958.0,443.8 L956.0,438.0 L953.7,432.0 L951.2,426.1 L948.6,420.2 L946.0,414.6 L943.4,409.2 L940.7,403.9 L937.9,398.8 L935.0,393.7 L931.9,388.6 L928.5,383.4 L924.9,378.1 L921.0,372.8 L917.0,367.5 L912.8,362.2 L908.5,357.0 L904.2,352.0 L899.8,347.2 L895.4,342.5 L891.0,337.9 L886.3,333.4 L881.5,328.9 L876.4,324.3 L871.0,319.6 L865.3,314.8 L859.5,310.0 L853.5,305.3 L847.6,300.7 L841.7,296.5 L835.9,292.6 L830.1,288.9 L824.4,285.4 L818.6,282.1 L812.8,278.8 L807.0,275.6 L801.2,272.5 L795.3,269.5 L789.5,266.6 L783.6,263.7 L777.8,260.9 L772.0,258.0 L766.2,254.8 L760.5,251.3 L754.8,247.8 L749.1,244.6 L743.3,242.2 L737.4,240.9 L731.2,240.8 L724.9,241.7 L718.4,243.3 L712.0,245.3 L705.8,247.7 L700.0,250.0 L694.4,252.4 L688.9,255.2 L683.6,258.2 L678.6,261.4 L674.1,264.7 L670.0,268.0 L666.4,271.6 L663.3,275.7 L660.6,279.9 L658.3,283.9 L656.4,287.2 L654.9,289.6Z" fill="url(#leftg)"/>
<path d="M722.0,258.0 L742.0,272.0 L762.0,287.0 L801.0,314.0 L830.0,345.0 L861.0,376.0 L891.0,416.0 L917.0,453.0 L934.0,490.0 L944.0,522.0 L947.0,545.0 L944.0,565.0 L956.0,541.0 L963.2,526.6 L966.8,500.0 L965.0,480.0 L959.8,449.4 L946.0,414.6 L928.5,383.4 L904.2,352.0 L876.4,324.3 L841.7,296.5 L807.0,275.6 L772.0,258.0 L737.4,240.9 Z" fill="#000" fill-opacity="0.045"/>
<path d="M654.9,289.6 L655.4,293.2 L656.2,297.9 L657.0,303.7 L658.0,310.1 L658.9,317.0 L659.8,324.0 L660.6,331.4 L661.3,339.5 L662.0,348.0 L662.8,356.7 L663.7,365.3 L664.8,373.8 L666.1,382.1 L667.6,390.3 L669.1,398.6 L670.9,406.8 L672.7,415.1 L674.7,423.3 L676.8,431.5 L678.9,439.6 L681.2,447.7 L683.6,455.9 L686.4,464.3 L689.5,472.8 L693.0,481.8 L696.8,491.1 L701.0,500.6 L705.3,510.0 L709.8,518.9 L714.3,527.2 L718.9,534.8 L723.5,541.9 L728.2,548.5 L733.2,554.9 L738.4,560.9 L744.0,566.8 L750.1,572.6 L756.6,578.2 L763.4,583.5 L770.3,588.5 L777.1,592.8 L783.6,596.5 L790.0,599.3 L796.4,601.4 L802.8,602.9 L808.9,604.0 L814.7,605.0 L820.0,606.0 L824.6,607.0 L828.5,607.8 L832.0,608.5 L835.6,609.0 L839.4,609.3 L844.0,609.6 L849.4,609.7 L855.6,609.8 L862.0,609.7 L868.4,609.4 L874.6,609.0 L880.0,608.4 L884.7,607.6 L889.1,606.6 L893.0,605.5 L896.8,604.2 L900.4,602.7 L904.0,601.0 L907.6,599.1 L911.0,596.9 L914.3,594.5 L917.5,592.0 L920.6,589.4 L923.5,586.8 L926.3,584.1 L928.9,581.3 L931.4,578.4 L933.8,575.5 L936.0,572.7 L938.0,570.0 L939.8,567.5 L941.4,565.2 L942.8,562.9 L944.2,560.6 L945.6,558.4 L947.0,556.0 L948.5,553.6 L950.1,551.1 L951.6,548.5 L953.1,546.0 L954.6,543.5 L956.0,541.0 L957.3,538.7 L958.7,536.6 L959.9,534.5 L961.1,532.3 L962.2,529.7 L963.2,526.6 L964.1,522.8 L964.9,518.4 L965.6,513.7 L966.1,508.8 L966.6,504.2 L966.8,500.0 L966.9,496.4 L966.7,493.2 L966.5,490.3 L966.1,487.2 L965.6,483.9 L965.0,480.0 L964.4,475.6 L963.8,470.7 L963.1,465.6 L962.3,460.3 L961.2,454.9 L959.8,449.4 L958.0,443.8 L956.0,438.0 L953.7,432.0 L951.2,426.1 L948.6,420.2 L946.0,414.6 L943.4,409.2 L940.7,403.9 L937.9,398.8 L935.0,393.7 L931.9,388.6 L928.5,383.4 L924.9,378.1 L921.0,372.8 L917.0,367.5 L912.8,362.2 L908.5,357.0 L904.2,352.0 L899.8,347.2 L895.4,342.5 L891.0,337.9 L886.3,333.4 L881.5,328.9 L876.4,324.3 L871.0,319.6 L865.3,314.8 L859.5,310.0 L853.5,305.3 L847.6,300.7 L841.7,296.5 L835.9,292.6 L830.1,288.9 L824.4,285.4 L818.6,282.1 L812.8,278.8 L807.0,275.6 L801.2,272.5 L795.3,269.5 L789.5,266.6 L783.6,263.7 L777.8,260.9 L772.0,258.0 L766.2,254.8 L760.5,251.3 L754.8,247.8 L749.1,244.6 L743.3,242.2 L737.4,240.9 L731.2,240.8 L724.9,241.7 L718.4,243.3 L712.0,245.3 L705.8,247.7 L700.0,250.0 L694.4,252.4 L688.9,255.2 L683.6,258.2 L678.6,261.4 L674.1,264.7 L670.0,268.0 L666.4,271.6 L663.3,275.7 L660.6,279.9 L658.3,283.9 L656.4,287.2 L654.9,289.6Z" fill="none" stroke="#3a3a3a" stroke-width="1"/>
<path d="M722.0,258.0 L724.2,259.5 L727.2,261.6 L730.8,264.1 L734.6,266.7 L738.4,269.4 L742.0,272.0 L745.1,274.3 L748.0,276.5 L750.8,278.7 L753.9,281.1 L757.6,283.8 L762.0,287.0 L767.5,290.8 L774.0,295.0 L780.9,299.5 L788.0,304.3 L794.9,309.1 L801.0,314.0 L806.4,318.9 L811.3,324.0 L816.0,329.2 L820.6,334.5 L825.2,339.8 L830.0,345.0 L835.1,350.1 L840.2,355.0 L845.4,359.9 L850.7,365.0 L855.9,370.3 L861.0,376.0 L866.1,382.2 L871.2,388.8 L876.3,395.6 L881.3,402.6 L886.2,409.4 L891.0,416.0 L895.7,422.3 L900.3,428.6 L904.8,434.7 L909.1,440.8 L913.2,446.9 L917.0,453.0 L920.4,459.2 L923.6,465.5 L926.5,471.8 L929.2,478.0 L931.7,484.1 L934.0,490.0 L936.2,495.7 L938.1,501.4 L939.9,506.9 L941.4,512.2 L942.8,517.2 L944.0,522.0 L945.0,526.4 L945.7,530.4 L946.3,534.2 L946.7,537.9 L946.9,541.4 L947.0,545.0 L946.8,548.7 L946.3,552.6 L945.7,556.4 L945.0,559.9 L944.4,562.9 L944.0,565.0" fill="none" stroke="#000" stroke-opacity="0.13" stroke-width="9" transform="translate(5,-2)" filter="url(#sb)"/>
<path d="M722.0,258.0 L724.2,259.5 L727.2,261.6 L730.8,264.1 L734.6,266.7 L738.4,269.4 L742.0,272.0 L745.1,274.3 L748.0,276.5 L750.8,278.7 L753.9,281.1 L757.6,283.8 L762.0,287.0 L767.5,290.8 L774.0,295.0 L780.9,299.5 L788.0,304.3 L794.9,309.1 L801.0,314.0 L806.4,318.9 L811.3,324.0 L816.0,329.2 L820.6,334.5 L825.2,339.8 L830.0,345.0 L835.1,350.1 L840.2,355.0 L845.4,359.9 L850.7,365.0 L855.9,370.3 L861.0,376.0 L866.1,382.2 L871.2,388.8 L876.3,395.6 L881.3,402.6 L886.2,409.4 L891.0,416.0 L895.7,422.3 L900.3,428.6 L904.8,434.7 L909.1,440.8 L913.2,446.9 L917.0,453.0 L920.4,459.2 L923.6,465.5 L926.5,471.8 L929.2,478.0 L931.7,484.1 L934.0,490.0 L936.2,495.7 L938.1,501.4 L939.9,506.9 L941.4,512.2 L942.8,517.2 L944.0,522.0 L945.0,526.4 L945.7,530.4 L946.3,534.2 L946.7,537.9 L946.9,541.4 L947.0,545.0 L946.8,548.7 L946.3,552.6 L945.7,556.4 L945.0,559.9 L944.4,562.9 L944.0,565.0" fill="none" stroke="#fff" stroke-opacity="0.7" stroke-width="2"/>
<path d="M722.0,258.0 L724.2,259.5 L727.2,261.6 L730.8,264.1 L734.6,266.7 L738.4,269.4 L742.0,272.0 L745.1,274.3 L748.0,276.5 L750.8,278.7 L753.9,281.1 L757.6,283.8 L762.0,287.0 L767.5,290.8 L774.0,295.0 L780.9,299.5 L788.0,304.3 L794.9,309.1 L801.0,314.0 L806.4,318.9 L811.3,324.0 L816.0,329.2 L820.6,334.5 L825.2,339.8 L830.0,345.0 L835.1,350.1 L840.2,355.0 L845.4,359.9 L850.7,365.0 L855.9,370.3 L861.0,376.0 L866.1,382.2 L871.2,388.8 L876.3,395.6 L881.3,402.6 L886.2,409.4 L891.0,416.0 L895.7,422.3 L900.3,428.6 L904.8,434.7 L909.1,440.8 L913.2,446.9 L917.0,453.0 L920.4,459.2 L923.6,465.5 L926.5,471.8 L929.2,478.0 L931.7,484.1 L934.0,490.0 L936.2,495.7 L938.1,501.4 L939.9,506.9 L941.4,512.2 L942.8,517.2 L944.0,522.0 L945.0,526.4 L945.7,530.4 L946.3,534.2 L946.7,537.9 L946.9,541.4 L947.0,545.0 L946.8,548.7 L946.3,552.6 L945.7,556.4 L945.0,559.9 L944.4,562.9 L944.0,565.0" fill="none" stroke="#000" stroke-opacity="0.22" stroke-width="1" transform="translate(1.8,-1)"/>
<rect x="735.6" y="273.1" width="15" height="7" rx="3" fill="#8a8a8a"/>
<rect x="735.1" y="271.8" width="15" height="5" rx="2.5" fill="#f6f6f6"/>
<rect x="754.7" y="288.1" width="15" height="7" rx="3" fill="#8a8a8a"/>
<rect x="754.2" y="286.8" width="15" height="5" rx="2.5" fill="#f6f6f6"/>
<rect x="774.9" y="301.5" width="15" height="7" rx="3" fill="#8a8a8a"/>
<rect x="774.4" y="300.2" width="15" height="5" rx="2.5" fill="#f6f6f6"/>
<rect x="793.6" y="314.8" width="15" height="7" rx="3" fill="#8a8a8a"/>
<rect x="793.1" y="313.5" width="15" height="5" rx="2.5" fill="#f6f6f6"/>
<rect x="822.5" y="346.1" width="15" height="7" rx="3" fill="#8a8a8a"/>
<rect x="822.0" y="344.8" width="15" height="5" rx="2.5" fill="#f6f6f6"/>
<rect x="853.8" y="376.7" width="15" height="7" rx="3" fill="#8a8a8a"/>
<rect x="853.3" y="375.4" width="15" height="5" rx="2.5" fill="#f6f6f6"/>
<rect x="871.2" y="394.8" width="15" height="7" rx="3" fill="#8a8a8a"/>
<rect x="870.7" y="393.5" width="15" height="5" rx="2.5" fill="#f6f6f6"/>
<rect x="884.0" y="417.5" width="15" height="7" rx="3" fill="#8a8a8a"/>
<rect x="883.5" y="416.2" width="15" height="5" rx="2.5" fill="#f6f6f6"/>
<rect x="898.0" y="434.7" width="15" height="7" rx="3" fill="#8a8a8a"/>
<rect x="897.5" y="433.4" width="15" height="5" rx="2.5" fill="#f6f6f6"/>
<rect x="910.4" y="453.9" width="15" height="7" rx="3" fill="#8a8a8a"/>
<rect x="909.9" y="452.6" width="15" height="5" rx="2.5" fill="#f6f6f6"/>
<rect x="921.5" y="473.0" width="15" height="7" rx="3" fill="#8a8a8a"/>
<rect x="921.0" y="471.7" width="15" height="5" rx="2.5" fill="#f6f6f6"/>
<rect x="929.0" y="491.1" width="15" height="7" rx="3" fill="#8a8a8a"/>
<rect x="928.5" y="489.8" width="15" height="5" rx="2.5" fill="#f6f6f6"/>
<rect x="937.5" y="522.3" width="15" height="7" rx="3" fill="#8a8a8a"/>
<rect x="937.0" y="521.0" width="15" height="5" rx="2.5" fill="#f6f6f6"/>
<rect x="943.0" y="538.5" width="9" height="7" rx="3" fill="#8a8a8a"/>
<rect x="942.5" y="537.2" width="9" height="5" rx="2.5" fill="#f6f6f6"/>
<rect x="942.0" y="547.0" width="9" height="7" rx="3" fill="#8a8a8a"/>
<rect x="941.5" y="545.7" width="9" height="5" rx="2.5" fill="#f6f6f6"/>
<rect x="940.5" y="556.9" width="9" height="7" rx="3" fill="#8a8a8a"/>
<rect x="940.0" y="555.6" width="9" height="5" rx="2.5" fill="#f6f6f6"/>
<path d="M656.0,265.0 L654.1,264.8 L651.6,264.5 L648.6,264.1 L645.2,263.8 L641.8,263.3 L638.3,262.9 L635.0,262.4 L632.0,262.0 L629.3,261.6 L626.8,261.3 L624.4,261.0 L622.0,260.7 L619.6,260.3 L617.2,259.7 L614.7,259.0 L612.0,258.0 L609.2,256.8 L606.2,255.3 L603.2,253.7 L600.1,251.9 L597.0,250.0 L593.9,248.0 L590.9,246.0 L588.0,244.0 L585.1,242.0 L582.0,239.9 L579.0,237.7 L576.0,235.4 L573.2,233.1 L570.7,230.8 L568.6,228.4 L567.0,226.0 L565.9,223.5 L565.2,220.9 L564.8,218.2 L564.8,215.5 L565.1,212.8 L565.5,210.1 L566.2,207.5 L567.0,205.0 L568.0,202.6 L569.4,200.1 L571.0,197.7 L572.8,195.3 L574.8,193.0 L576.8,190.9 L578.9,188.8 L581.0,187.0 L583.1,185.3 L585.4,183.8 L587.8,182.4 L590.2,181.1 L592.7,179.9 L595.1,178.8 L597.6,177.9 L600.0,177.0 L602.4,176.2 L604.9,175.5 L607.3,174.9 L609.8,174.4 L612.2,174.0 L614.6,173.8 L616.9,173.8 L619.0,174.0 L621.0,174.4 L623.0,175.0 L625.0,175.8 L626.8,176.8 L628.6,177.9 L630.2,179.1 L631.7,180.5 L633.0,182.0 L634.1,183.7 L635.1,185.6 L635.9,187.6 L636.6,189.8 L637.2,192.1 L637.8,194.4 L638.4,196.7 L639.0,199.0 L639.6,201.3 L640.1,203.7 L640.6,206.2 L641.1,208.7 L641.5,211.2 L642.0,213.6 L642.5,215.9 L643.0,218.0 L643.6,220.1 L644.3,222.2 L645.0,224.2 L645.8,226.2 L646.4,228.0 L647.1,229.6 L647.6,231.0 L648.0,232.0" fill="none" stroke="#1c1c1c" stroke-width="10.0" stroke-linecap="round" stroke-linejoin="round" transform="translate(0.8,1.8)" opacity="0.8"/>
<path d="M656.0,265.0 L654.1,264.8 L651.6,264.5 L648.6,264.1 L645.2,263.8 L641.8,263.3 L638.3,262.9 L635.0,262.4 L632.0,262.0 L629.3,261.6 L626.8,261.3 L624.4,261.0 L622.0,260.7 L619.6,260.3 L617.2,259.7 L614.7,259.0 L612.0,258.0 L609.2,256.8 L606.2,255.3 L603.2,253.7 L600.1,251.9 L597.0,250.0 L593.9,248.0 L590.9,246.0 L588.0,244.0 L585.1,242.0 L582.0,239.9 L579.0,237.7 L576.0,235.4 L573.2,233.1 L570.7,230.8 L568.6,228.4 L567.0,226.0 L565.9,223.5 L565.2,220.9 L564.8,218.2 L564.8,215.5 L565.1,212.8 L565.5,210.1 L566.2,207.5 L567.0,205.0 L568.0,202.6 L569.4,200.1 L571.0,197.7 L572.8,195.3 L574.8,193.0 L576.8,190.9 L578.9,188.8 L581.0,187.0 L583.1,185.3 L585.4,183.8 L587.8,182.4 L590.2,181.1 L592.7,179.9 L595.1,178.8 L597.6,177.9 L600.0,177.0 L602.4,176.2 L604.9,175.5 L607.3,174.9 L609.8,174.4 L612.2,174.0 L614.6,173.8 L616.9,173.8 L619.0,174.0 L621.0,174.4 L623.0,175.0 L625.0,175.8 L626.8,176.8 L628.6,177.9 L630.2,179.1 L631.7,180.5 L633.0,182.0 L634.1,183.7 L635.1,185.6 L635.9,187.6 L636.6,189.8 L637.2,192.1 L637.8,194.4 L638.4,196.7 L639.0,199.0 L639.6,201.3 L640.1,203.7 L640.6,206.2 L641.1,208.7 L641.5,211.2 L642.0,213.6 L642.5,215.9 L643.0,218.0 L643.6,220.1 L644.3,222.2 L645.0,224.2 L645.8,226.2 L646.4,228.0 L647.1,229.6 L647.6,231.0 L648.0,232.0" fill="none" stroke="#a5a5a5" stroke-width="8.5" stroke-linecap="round" stroke-linejoin="round"/>
<path d="M656.0,265.0 L654.1,264.8 L651.6,264.5 L648.6,264.1 L645.2,263.8 L641.8,263.3 L638.3,262.9 L635.0,262.4 L632.0,262.0 L629.3,261.6 L626.8,261.3 L624.4,261.0 L622.0,260.7 L619.6,260.3 L617.2,259.7 L614.7,259.0 L612.0,258.0 L609.2,256.8 L606.2,255.3 L603.2,253.7 L600.1,251.9 L597.0,250.0 L593.9,248.0 L590.9,246.0 L588.0,244.0 L585.1,242.0 L582.0,239.9 L579.0,237.7 L576.0,235.4 L573.2,233.1 L570.7,230.8 L568.6,228.4 L567.0,226.0 L565.9,223.5 L565.2,220.9 L564.8,218.2 L564.8,215.5 L565.1,212.8 L565.5,210.1 L566.2,207.5 L567.0,205.0 L568.0,202.6 L569.4,200.1 L571.0,197.7 L572.8,195.3 L574.8,193.0 L576.8,190.9 L578.9,188.8 L581.0,187.0 L583.1,185.3 L585.4,183.8 L587.8,182.4 L590.2,181.1 L592.7,179.9 L595.1,178.8 L597.6,177.9 L600.0,177.0 L602.4,176.2 L604.9,175.5 L607.3,174.9 L609.8,174.4 L612.2,174.0 L614.6,173.8 L616.9,173.8 L619.0,174.0 L621.0,174.4 L623.0,175.0 L625.0,175.8 L626.8,176.8 L628.6,177.9 L630.2,179.1 L631.7,180.5 L633.0,182.0 L634.1,183.7 L635.1,185.6 L635.9,187.6 L636.6,189.8 L637.2,192.1 L637.8,194.4 L638.4,196.7 L639.0,199.0 L639.6,201.3 L640.1,203.7 L640.6,206.2 L641.1,208.7 L641.5,211.2 L642.0,213.6 L642.5,215.9 L643.0,218.0 L643.6,220.1 L644.3,222.2 L645.0,224.2 L645.8,226.2 L646.4,228.0 L647.1,229.6 L647.6,231.0 L648.0,232.0" fill="none" stroke="#e9e9e9" stroke-width="5.3" stroke-linecap="round" stroke-linejoin="round" transform="translate(-0.6,-1)"/>
<path d="M657.5,269.0L654.5,261.0M653.1,268.4L650.0,260.5M648.7,267.9L645.6,260.0M644.2,267.4L641.2,259.5M639.7,266.9L636.8,258.9M635.2,266.3L632.4,258.3M630.9,265.6L627.9,257.7M626.4,265.1L623.5,257.1M621.6,264.5L619.4,256.3M616.8,263.6L615.5,255.2M612.2,262.2L611.7,253.7M607.9,260.4L607.8,251.9M603.8,258.3L604.0,249.8M599.7,256.1L600.3,247.6M595.8,253.7L596.6,245.3M592.0,251.3L592.9,242.8M588.3,248.8L589.3,240.3M584.6,246.2L585.6,237.8M580.9,243.6L582.0,235.2M577.1,241.0L578.6,232.6M573.3,238.2L575.3,229.9M569.4,235.0L572.5,227.1M565.7,231.2L570.5,224.1M562.8,226.5L569.2,220.9M561.3,221.5L568.7,217.3M560.9,216.4L568.9,213.4M561.3,211.4L569.6,209.5M562.4,206.6L570.9,205.7M564.1,201.8L572.6,202.3M566.5,197.5L574.8,198.9M569.2,193.6L577.5,195.7M572.3,190.0L580.4,192.7M575.7,186.6L583.5,189.9M579.3,183.4L586.8,187.4M583.2,180.6L590.3,185.3M587.3,178.2L594.1,183.4M591.6,176.2L598.0,181.8M595.9,174.4L602.0,180.3M600.3,172.9L606.1,179.1M604.9,171.5L610.1,178.2M609.7,170.4L614.1,177.7M614.9,169.8L617.9,177.8M620.2,170.2L621.5,178.6M625.2,171.6L624.8,180.1M629.9,174.0L627.8,182.2M634.2,177.3L630.2,184.8M637.5,181.5L631.9,188.0M639.4,186.0L633.3,191.8M640.7,190.4L634.4,196.1M641.8,194.7L635.5,200.4M643.0,199.2L636.4,204.6M643.9,203.6L637.3,208.9M644.7,208.0L638.1,213.4M645.4,212.2L639.2,217.9M646.3,216.3L640.5,222.5M647.6,220.5L642.0,226.8M649.2,224.6L643.6,231.0" stroke="#6a6a6a" stroke-width="1.1" fill="none"/>
<path d="M633.0,242.0 L634.8,241.4 L637.4,240.6 L640.4,239.6 L643.6,238.5 L646.9,237.3 L650.0,236.0 L653.0,234.6 L656.0,233.1 L659.1,231.5 L662.1,229.8 L665.1,227.9 L668.0,226.0 L670.8,223.9 L673.6,221.5 L676.2,219.0 L678.9,216.5 L681.5,214.1 L684.0,212.0 L686.6,210.0 L689.3,208.0 L692.0,206.1 L694.4,204.4 L696.5,203.0 L698.0,202.0" fill="none" stroke="#222" stroke-width="29" stroke-linecap="round" transform="translate(1,3)" opacity="0.6"/>
<path d="M633.0,242.0 L634.8,241.4 L637.4,240.6 L640.4,239.6 L643.6,238.5 L646.9,237.3 L650.0,236.0 L653.0,234.6 L656.0,233.1 L659.1,231.5 L662.1,229.8 L665.1,227.9 L668.0,226.0 L670.8,223.9 L673.6,221.5 L676.2,219.0 L678.9,216.5 L681.5,214.1 L684.0,212.0 L686.6,210.0 L689.3,208.0 L692.0,206.1 L694.4,204.4 L696.5,203.0 L698.0,202.0" fill="none" stroke="url(#neckg)" stroke-width="27" stroke-linecap="round"/>
<ellipse cx="704" cy="201" rx="17" ry="14" transform="rotate(-25 704 201)" fill="url(#bulbg)"/>
<path d="M641.0,287.0 L645.2,285.0 L650.8,282.3 L657.6,279.2 L665.0,275.6 L672.8,271.9 L680.7,268.1 L688.2,264.4 L695.0,261.0 L701.6,257.6 L708.5,253.9 L715.5,250.1 L722.4,246.4 L728.8,242.8 L734.5,239.7 L739.3,237.0 L743.0,235.0" fill="none" stroke="#1c1c1c" stroke-width="11.5" stroke-linecap="round" stroke-linejoin="round" transform="translate(0.8,1.8)" opacity="0.8"/>
<path d="M641.0,287.0 L645.2,285.0 L650.8,282.3 L657.6,279.2 L665.0,275.6 L672.8,271.9 L680.7,268.1 L688.2,264.4 L695.0,261.0 L701.6,257.6 L708.5,253.9 L715.5,250.1 L722.4,246.4 L728.8,242.8 L734.5,239.7 L739.3,237.0 L743.0,235.0" fill="none" stroke="#a5a5a5" stroke-width="10.0" stroke-linecap="round" stroke-linejoin="round"/>
<path d="M641.0,287.0 L645.2,285.0 L650.8,282.3 L657.6,279.2 L665.0,275.6 L672.8,271.9 L680.7,268.1 L688.2,264.4 L695.0,261.0 L701.6,257.6 L708.5,253.9 L715.5,250.1 L722.4,246.4 L728.8,242.8 L734.5,239.7 L739.3,237.0 L743.0,235.0" fill="none" stroke="#e9e9e9" stroke-width="6.2" stroke-linecap="round" stroke-linejoin="round" transform="translate(-0.6,-1)"/>
<path d="M637.0,284.0L645.0,290.0M641.0,282.1L649.0,288.1M644.9,280.2L653.0,286.2M648.9,278.3L656.9,284.3M652.9,276.5L660.9,282.4M656.9,274.6L664.9,280.6M660.9,272.7L668.9,278.7M664.8,270.8L672.9,276.8M668.8,268.9L676.9,274.8M672.8,267.0L680.8,272.9M676.7,265.1L684.8,271.0M680.7,263.2L688.8,269.0M684.6,261.3L692.8,267.1M688.5,259.3L696.7,265.1M692.4,257.4L700.7,263.0M696.3,255.4L704.6,261.0M700.2,253.3L708.5,258.9M704.1,251.3L712.4,256.8M707.9,249.2L716.3,254.7M711.8,247.1L720.2,252.6M715.7,245.0L724.0,250.5M719.5,242.9L727.9,248.4M723.4,240.8L731.8,246.2M727.2,238.7L735.6,244.1M731.1,236.5L739.5,242.0M735.0,234.4L743.3,239.9" stroke="#6a6a6a" stroke-width="1.1" fill="none"/>
<path d="M645.0,275.0 L648.9,273.0 L654.1,270.3 L660.3,267.2 L667.1,263.6 L674.3,259.9 L681.6,256.1 L688.6,252.4 L695.0,249.0 L701.3,245.6 L707.9,241.9 L714.6,238.1 L721.1,234.4 L727.3,230.8 L732.8,227.7 L737.5,225.0 L741.0,223.0" fill="none" stroke="#1c1c1c" stroke-width="11.5" stroke-linecap="round" stroke-linejoin="round" transform="translate(0.8,1.8)" opacity="0.8"/>
<path d="M645.0,275.0 L648.9,273.0 L654.1,270.3 L660.3,267.2 L667.1,263.6 L674.3,259.9 L681.6,256.1 L688.6,252.4 L695.0,249.0 L701.3,245.6 L707.9,241.9 L714.6,238.1 L721.1,234.4 L727.3,230.8 L732.8,227.7 L737.5,225.0 L741.0,223.0" fill="none" stroke="#a5a5a5" stroke-width="10.0" stroke-linecap="round" stroke-linejoin="round"/>
<path d="M645.0,275.0 L648.9,273.0 L654.1,270.3 L660.3,267.2 L667.1,263.6 L674.3,259.9 L681.6,256.1 L688.6,252.4 L695.0,249.0 L701.3,245.6 L707.9,241.9 L714.6,238.1 L721.1,234.4 L727.3,230.8 L732.8,227.7 L737.5,225.0 L741.0,223.0" fill="none" stroke="#e9e9e9" stroke-width="6.2" stroke-linecap="round" stroke-linejoin="round" transform="translate(-0.6,-1)"/>
<path d="M640.9,272.2L649.1,277.8M644.9,270.1L653.1,275.8M649.0,268.0L657.2,273.7M653.0,265.9L661.2,271.6M657.1,263.8L665.3,269.5M661.1,261.8L669.3,267.4M665.2,259.7L673.4,265.4M669.2,257.6L677.4,263.3M673.2,255.5L681.5,261.2M677.3,253.4L685.5,259.0M681.3,251.3L689.6,256.9M685.3,249.2L693.6,254.8M689.3,247.1L697.6,252.6M693.3,244.9L701.6,250.4M697.2,242.8L705.6,248.2M701.2,240.6L709.6,246.0M705.2,238.3L713.6,243.7M709.1,236.1L717.6,241.5M713.1,233.9L721.5,239.2M717.0,231.6L725.5,237.0M721.0,229.4L729.4,234.7M724.9,227.1L733.4,232.4M728.9,224.9L737.3,230.2M732.8,222.6L741.3,227.9" stroke="#6a6a6a" stroke-width="1.1" fill="none"/>
<path d="M650.0,263.0 L653.5,261.0 L658.2,258.3 L663.7,255.1 L669.9,251.6 L676.4,247.8 L682.9,244.0 L689.2,240.4 L695.0,237.0 L700.7,233.7 L706.7,230.1 L712.8,226.5 L718.8,222.9 L724.5,219.5 L729.5,216.5 L733.8,213.9 L737.0,212.0" fill="none" stroke="#1c1c1c" stroke-width="11.5" stroke-linecap="round" stroke-linejoin="round" transform="translate(0.8,1.8)" opacity="0.8"/>
<path d="M650.0,263.0 L653.5,261.0 L658.2,258.3 L663.7,255.1 L669.9,251.6 L676.4,247.8 L682.9,244.0 L689.2,240.4 L695.0,237.0 L700.7,233.7 L706.7,230.1 L712.8,226.5 L718.8,222.9 L724.5,219.5 L729.5,216.5 L733.8,213.9 L737.0,212.0" fill="none" stroke="#a5a5a5" stroke-width="10.0" stroke-linecap="round" stroke-linejoin="round"/>
<path d="M650.0,263.0 L653.5,261.0 L658.2,258.3 L663.7,255.1 L669.9,251.6 L676.4,247.8 L682.9,244.0 L689.2,240.4 L695.0,237.0 L700.7,233.7 L706.7,230.1 L712.8,226.5 L718.8,222.9 L724.5,219.5 L729.5,216.5 L733.8,213.9 L737.0,212.0" fill="none" stroke="#e9e9e9" stroke-width="6.2" stroke-linecap="round" stroke-linejoin="round" transform="translate(-0.6,-1)"/>
<path d="M645.8,260.3L654.2,265.7M649.7,258.1L658.2,263.4M653.7,255.8L662.2,261.1M657.7,253.5L666.2,258.8M661.7,251.2L670.1,256.5M665.6,248.9L674.1,254.2M669.6,246.6L678.1,251.9M673.6,244.3L682.0,249.6M677.5,242.1L686.0,247.3M681.5,239.8L690.0,245.0M685.5,237.5L694.0,242.7M689.4,235.2L697.9,240.4M693.4,232.8L701.9,238.1M697.3,230.5L705.8,235.7M701.2,228.2L709.8,233.4M705.2,225.9L713.7,231.0M709.1,223.5L717.7,228.7M713.0,221.2L721.6,226.3M717.0,218.8L725.5,224.0M720.9,216.5L729.5,221.6M724.8,214.1L733.4,219.3M728.8,211.8L737.3,216.9" stroke="#6a6a6a" stroke-width="1.1" fill="none"/>
<line x1="539" y1="697" x2="539" y2="707" stroke="#1c9a1c" stroke-width="1.3"/>
<line x1="540" y1="708.5" x2="550" y2="708.5" stroke="#a01818" stroke-width="1.3"/>
<text x="536" y="697" font-size="7" fill="#2bb52b" font-family="Liberation Sans">Y</text>
<text x="536" y="712" font-size="7" fill="#5a5ad8" font-family="Liberation Sans">Z</text>
<text x="550" y="712" font-size="7" fill="#d02020" font-family="Liberation Sans">X</text>
</svg>

<div id="status" class="abs"><div class="abs t">Ready</div>
  <div class="pan" style="left:960px;width:19px"></div>
  <div class="pan" style="left:980px;width:22px"></div>
  <div class="pan" style="left:1003px;width:21px"></div>
  <div class="abs" style="left:981px;top:3px;font-size:7.7px;color:#1e1e1e">NUM</div>
</div>

<div id="flt" class="abs">
  <div class="abs" style="left:6px;top:4px;font-size:9.5px;color:#2a2a2a;letter-spacing:-0.5px">L...</div>
  <div class="abs" style="left:21px;top:3px;width:12px;height:12px;background:#b7b7b7"></div>
  <svg class="abs" style="left:24px;top:6px" width="6" height="6" viewBox="0 0 6 6"><path d="M1,1 L5,5 M5,1 L1,5" stroke="#fff" stroke-width="1"/></svg>
  <div class="abs" style="left:4px;top:19px;width:31px;height:115px;border:1px solid #e4e4e4;border-right-color:#fafafa;border-bottom-color:#fafafa"></div>
  <div class="fi" style="left:7px;top:22px"></div>
<div class="fi" style="left:22px;top:22px"><div class="abs" style="left:2.5px;top:0;width:1px;height:6px;background:#2a2a2a"></div><div class="abs" style="left:0;top:2.5px;width:6px;height:1px;background:#2a2a2a"></div></div>
<div class="fi" style="left:7px;top:36px"><div class="abs" style="left:2.5px;top:0;width:1px;height:6px;background:#2a2a2a"></div></div>
<div class="fi" style="left:22px;top:36px"><div class="abs" style="left:0;top:2.5px;width:6px;height:1px;background:#2a2a2a"></div></div>
<div class="fi" style="left:7px;top:50px"><div class="abs" style="left:1.5px;top:0;width:1px;height:6px;background:#2a2a2a"></div><div class="abs" style="left:3.5px;top:0;width:1px;height:6px;background:#2a2a2a"></div></div>
<div class="fi" style="left:22px;top:50px"><div class="abs" style="left:1.5px;top:0;width:1px;height:6px;background:#2a2a2a"></div><div class="abs" style="left:3.5px;top:0;width:1px;height:6px;background:#2a2a2a"></div></div>
<div class="fi" style="left:7px;top:64px"><div class="abs" style="left:0;top:3.5px;width:6px;height:1px;background:#2a2a2a"></div></div>
<div class="fi" style="left:22px;top:64px"><div class="abs" style="left:0;top:1.5px;width:6px;height:1px;background:#2a2a2a"></div></div>
<div class="fi" style="left:7px;top:78px"><div class="abs" style="left:2.5px;top:0;width:1px;height:6px;background:#2a2a2a"></div><div class="abs" style="left:0;top:2.5px;width:3px;height:1px;background:#2a2a2a"></div></div>
<div class="fi" style="left:22px;top:78px"><div class="abs" style="left:2.5px;top:0;width:1px;height:6px;background:#2a2a2a"></div><div class="abs" style="left:3px;top:2.5px;width:3px;height:1px;background:#2a2a2a"></div></div>
<div class="fi" style="left:7px;top:92px"><div class="abs" style="left:0;top:2.5px;width:6px;height:1px;background:#2a2a2a"></div><div class="abs" style="left:2.5px;top:0;width:1px;height:3px;background:#2a2a2a"></div></div>
<div class="fi" style="left:22px;top:92px"><div class="abs" style="left:0;top:2.5px;width:6px;height:1px;background:#2a2a2a"></div><div class="abs" style="left:2.5px;top:3px;width:1px;height:3px;background:#2a2a2a"></div></div>
<div class="fi" style="left:7px;top:106px"><div class="abs" style="left:1.5px;top:0;width:1px;height:6px;border-left:1px dotted #2a2a2a"></div></div>
<div class="fi" style="left:22px;top:106px"><div class="abs" style="left:3.5px;top:0;width:1px;height:6px;border-left:1px dotted #2a2a2a"></div></div>
<div class="fi" style="left:7px;top:120px"><div class="abs" style="left:0;top:1.5px;width:6px;height:1px;border-top:1px dotted #2a2a2a"></div></div>
<div class="fi" style="left:22px;top:120px"><div class="abs" style="left:0;top:3.5px;width:6px;height:1px;border-top:1px dotted #2a2a2a"></div></div>
</div>

<div id="dlg" class="abs">
  <div class="abs" style="left:38px;top:4px;font-size:9.35px;color:#2e3a48;white-space:nowrap">BMP Export Options</div>
  <div class="abs" style="left:136px;top:0;width:20px;height:13px;background:#c9504e"></div>
  <svg class="abs" style="left:142px;top:2px" width="9" height="9" viewBox="0 0 9 9"><path d="M2,2 L7,7 M7,2 L2,7" stroke="#fff" stroke-width="1.2"/></svg>
  <div class="cl">
    <div class="abs" style="left:4px;top:8px;width:139px;height:73px;border:1px solid #c8c8c8;border-right-color:#fff;border-bottom-color:#fff;box-shadow:inset -1px -1px 0 #c8c8c8, 1px 1px 0 #fff"></div>
    <div class="dt" style="left:8px;top:4px;background:#f0f0f0;padding:0 1px">Bitmap Settings</div>
    <div class="dt" style="left:16px;top:21.5px">Width</div>
    <div class="edit" style="left:40px;top:18px;width:28px;height:14px"></div>
    <div class="dt" style="left:44px;top:21px">1024</div>
    <div class="dt" style="left:77px;top:21.5px">Height</div>
    <div class="edit" style="left:102px;top:18px;width:28px;height:14px"></div>
    <div class="dt" style="left:106px;top:21px">1024</div>
    <div class="rad" style="left:28px;top:42px"><div class="abs" style="left:1.5px;top:1.5px;width:2.5px;height:2.5px;border-radius:50%;background:#111"></div></div>
    <div class="dt" style="left:38px;top:41px">RGB Color, anti-aliased</div>
    <div class="rad" style="left:28px;top:54.5px"></div>
    <div class="dt" style="left:38px;top:53.5px">RGB Color</div>
    <div class="rad" style="left:28px;top:67px"></div>
    <div class="dt" style="left:38px;top:66px">256 Color (smaller file size)</div>
    <div class="chk" style="left:27px;top:93px"></div>
    <div class="dt" style="left:38px;top:93.5px">Flip Texture Map Vertically</div>
    <div class="chk" style="left:27px;top:109px"></div>
    <div class="dt" style="left:38px;top:109.5px">Flip Texture Map Horizontally</div>
    <div class="chk" style="left:27px;top:124.5px"></div>
    <div class="dt" style="left:38px;top:125px">Include hidden facets</div>
    <div class="chk" style="left:27px;top:140px"></div>
    <div class="dt" style="left:38px;top:140.5px">Include labels</div>
    <div class="dbtn" style="left:21px;top:157px;width:48px"></div>
    <div class="dt" style="left:35px;top:160.5px">Cancel</div>
    <div class="dbtn" style="left:78px;top:157px;width:48px;border:1px solid #3c3c3c;box-shadow:inset 1px 1px 0 #fff, inset -1px -1px 0 #8a8a8a"></div>
    <div class="dt" style="left:97px;top:160.5px">OK</div>
  </div>
</div>

</body></html>
